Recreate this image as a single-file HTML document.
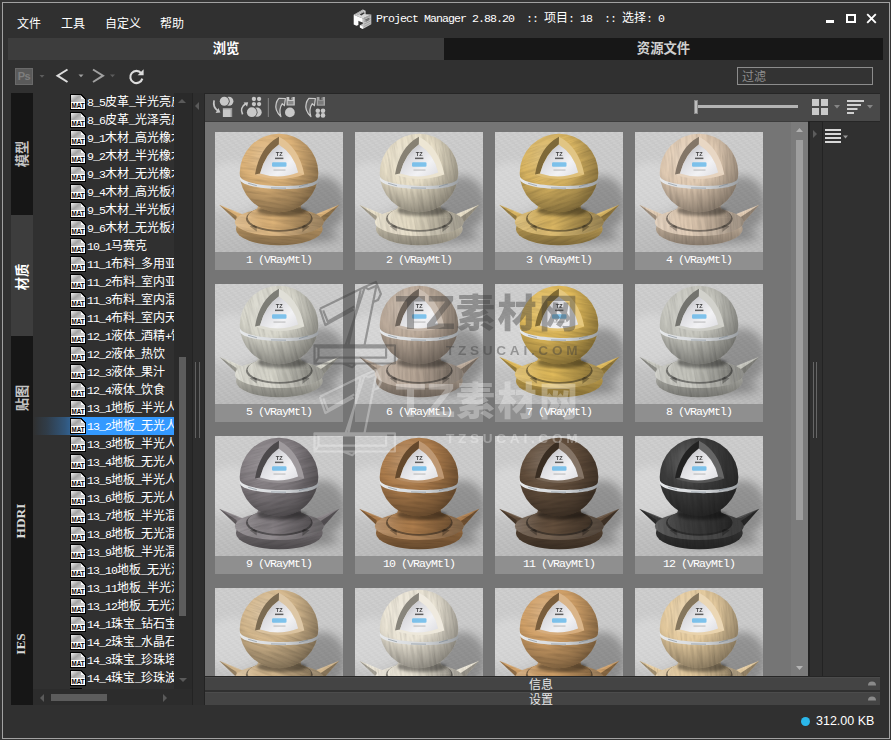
<!DOCTYPE html>
<html lang="zh"><head><meta charset="utf-8"><title>Project Manager</title>
<style>
html,body{margin:0;padding:0;background:#353535;}
body{width:891px;height:740px;overflow:hidden;font-family:"Liberation Sans","Noto Sans CJK SC",sans-serif;font-size:12px;color:#fff;}
#win{position:relative;width:891px;height:740px;background:#353535;overflow:hidden;}
#win div,#win span.ab,#win svg{position:absolute;}
.frame{left:2px;top:2px;width:886px;height:735px;border:1px solid #a2a2a2;background:#303030;}
.menu{top:16px;height:16px;line-height:16px;font-size:12px;color:#fff;white-space:nowrap;}
.title{left:376px;top:11px;height:16px;line-height:16px;white-space:nowrap;color:#fff;font-family:"Liberation Mono","Noto Sans CJK SC",monospace;font-size:12px;}
.a{font-family:"Liberation Mono",monospace;font-size:11.6px;letter-spacing:-.96px;}
.tab{top:38px;height:22px;line-height:21px;text-align:center;font-weight:bold;font-size:13.33px;}
.vt{left:11px;width:22px;background:#161616;}
.vt span{position:absolute;left:calc(50% - 1px);top:50%;white-space:nowrap;font-weight:bold;font-size:13.33px;transform:translate(-50%,-50%) rotate(-90deg);color:#c4c4c4;}
.row{left:0px;width:141px;height:18px;overflow:hidden;white-space:nowrap;}
.row .t{position:absolute;left:54px;top:1px;height:18px;line-height:18px;font-family:"Liberation Mono","Noto Sans CJK SC",monospace;font-size:12px;color:#fff;white-space:nowrap;}
.tile{width:128px;height:138px;background:#8f8f8f;overflow:hidden;}
.tile .lb{left:0;top:120px;width:128px;height:18px;line-height:16px;text-align:center;color:#fff;font-family:"Liberation Mono",monospace;font-size:12px;white-space:nowrap;background:#8f8f8f;}

</style></head>
<body>
<div id="win">
<div class="frame"></div>
<div class="menu" style="left:17px">文件</div>
<div class="menu" style="left:61px">工具</div>
<div class="menu" style="left:105px">自定义</div>
<div class="menu" style="left:160px">帮助</div>
<svg style="left:352.5px;top:8.5px" width="19" height="21" viewBox="0 0 19 21">
<path d="M.7 5.8 L9.8 .4 L12.6 1.7 V5.2 L18.3 5.6 L9.8 9.6Z" fill="#d6d6d6"/>
<path d="M6.6 5.4 L10.4 3.2 L12 4 L8.4 6.4Z" fill="#3a3a3a"/>
<path d="M9.8 9.6 L18.3 5.6 V15.2 L9.8 20 L6.9 18.6 V16.3 L9.8 14.8Z" fill="#c2c2c2"/>
<path d="M10.6 11.2 L16.4 8.4 V11 L12.6 13 V10.9Z" fill="#6a6a6a"/>
<path d="M.7 5.8 L9.8 9.6 V13.6 L6.9 12.4 L5.4 11.8 V16 L3.5 16.8 L.7 15.4Z" fill="#fdfdfd"/>
<path d="M6.9 16.3 L9.8 17.6 V20 L6.9 18.6Z" fill="#fff"/>
<path d="M2 5.6 L10.4 .9 M3.6 6.3 L11.6 1.8 M11 9.8 L17.8 6.6 M11 12.6 L17.8 9.2 M11 15.2 L17.8 11.8 M11 17.6 L17.8 14" stroke="#8a8a8a" stroke-width=".6" fill="none"/>
</svg>
<div class="title"><span class="a">Project&nbsp;Manager&nbsp;2.88.20&nbsp;&nbsp;::&nbsp;</span>项目<span class="a">:&nbsp;18&nbsp;&nbsp;::&nbsp;</span>选择<span class="a">:&nbsp;0</span></div>
<div style="left:826px;top:20px;width:8px;height:3px;background:#fff"></div>
<div style="left:846px;top:14px;width:6px;height:5px;border:2px solid #fff"></div>
<svg style="left:866px;top:13px" width="11" height="11" viewBox="0 0 11 11"><path d="M1.2 1.2 L9.8 9.8 M9.8 1.2 L1.2 9.8" stroke="#fff" stroke-width="1.9" fill="none"/></svg>
<div class="tab" style="left:8px;width:436px;background:#3d3d3d;color:#fff">浏览</div>
<div class="tab" style="left:444px;width:439px;background:#171717;color:#cfcfcf">资源文件</div>
<div style="left:15px;top:68px;width:16px;height:15px;border:1px solid #6a6a6a;background:#5a5a5a;color:#7e7e7e;font-size:11px;line-height:15px;text-align:center;font-weight:bold;letter-spacing:-.5px">Ps</div>
<svg style="left:36px;top:64px" width="120" height="24" viewBox="36 64 120 24">
<path d="M39.5 75 h5 l-2.5 2.8z" fill="#5c5c5c"/>
<path d="M67.5 69.5 L57.5 75.7 L67.5 82" stroke="#dcdcdc" stroke-width="2" fill="none"/>
<path d="M78.5 74.5 h5 l-2.5 2.8z" fill="#a0a0a0"/>
<path d="M93 69.5 L103 75.7 L93 82" stroke="#a0a0a0" stroke-width="2" fill="none"/>
<path d="M110 74.5 h5 l-2.5 2.8z" fill="#5c5c5c"/>
<path d="M141.2 73.2 A6.1 6.1 0 1 0 142.3 78.6" stroke="#dcdcdc" stroke-width="2.1" fill="none"/>
<path d="M143.6 69.3 V75.3 H137.6 Z" fill="#dcdcdc"/>
</svg>
<div style="left:737px;top:67px;width:134px;height:16px;border:1px solid #8c8c8c;background:#333;color:#8e8e8e;line-height:19px;font-size:12px;text-indent:4px;overflow:hidden">过滤</div>
<div class="vt" style="top:93px;height:122px;"><span style="top:calc(50% + 0px);">模型</span></div>
<div class="vt" style="top:215px;height:121px;background:#3d3d3d;"><span style="top:calc(50% + 1px);color:#fff;">材质</span></div>
<div class="vt" style="top:336px;height:121px;"><span style="top:calc(50% + 1.5px);">贴图</span></div>
<div class="vt" style="top:457px;height:122px;"><span style="top:calc(50% + 2.5px);font-family:'Liberation Serif',serif;color:#d8d8d8;">HDRI</span></div>
<div class="vt" style="top:579px;height:126px;"><span style="top:calc(50% + 2px);font-family:'Liberation Serif',serif;color:#d8d8d8;">IES</span></div>
<div style="left:801px;top:717px;width:8.5px;height:8.5px;border-radius:5px;background:#2bb7ea"></div>
<div style="left:816px;top:713px;height:16px;line-height:16px;font-size:12.5px;color:#fff;white-space:nowrap">312.00 KB</div>
<div style="left:205px;top:677px;width:675px;height:12px;background:#444;border-top:1px solid #4c4c4c"></div>
<div style="left:529px;top:678px;height:14px;line-height:14px;font-size:12px;color:#e6e6e6;white-space:nowrap">信息</div>
<svg style="left:868px;top:681px" width="8" height="5" viewBox="0 0 8 5"><path d="M0 4.5 A4 4 0 0 1 8 4.5Z" fill="#8a8a8a"/></svg>
<div style="left:205px;top:692px;width:675px;height:12px;background:#444;border-top:1px solid #4c4c4c"></div>
<div style="left:529px;top:693px;height:14px;line-height:14px;font-size:12px;color:#e6e6e6;white-space:nowrap">设置</div>
<svg style="left:868px;top:696px" width="8" height="5" viewBox="0 0 8 5"><path d="M0 4.5 A4 4 0 0 1 8 4.5Z" fill="#8a8a8a"/></svg>
<svg width="0" height="0" style="left:0;top:0"><defs><linearGradient id="ig" x1="0" y1="0" x2="1" y2=".6"><stop offset="0" stop-color="#f2f2f2"/><stop offset=".5" stop-color="#a4a4a4"/><stop offset="1" stop-color="#d2d2d2"/></linearGradient></defs></svg>
<div style="left:33px;top:93px;width:159px;height:596px;overflow:hidden;background:#303030">
<div class="row" style="left:0;top:0px;"><svg style="left:37px;top:1px" width="16" height="16" viewBox="0 0 16 16" shape-rendering="crispEdges"><path d="M0 0H11L16 5V16H0Z" fill="#000"/><path d="M1 1H10.6L15 5.4V8H1Z" fill="url(#ig)"/><path d="M11 1.6 V5 H14.4Z" fill="#f4f4f4" shape-rendering="auto"/><rect x="1" y="8" width="14" height="7" fill="#fff"/><text x="1.6" y="14" font-family="'Liberation Sans',sans-serif" font-weight="bold" font-size="7.2" textLength="13" lengthAdjust="spacingAndGlyphs" fill="#000" shape-rendering="auto">MAT</text></svg><span class="t"><span class="a">8_5</span>皮革<span class="a">_</span>半光亮皮</span></div>
<div class="row" style="left:0;top:18px;"><svg style="left:37px;top:1px" width="16" height="16" viewBox="0 0 16 16" shape-rendering="crispEdges"><path d="M0 0H11L16 5V16H0Z" fill="#000"/><path d="M1 1H10.6L15 5.4V8H1Z" fill="url(#ig)"/><path d="M11 1.6 V5 H14.4Z" fill="#f4f4f4" shape-rendering="auto"/><rect x="1" y="8" width="14" height="7" fill="#fff"/><text x="1.6" y="14" font-family="'Liberation Sans',sans-serif" font-weight="bold" font-size="7.2" textLength="13" lengthAdjust="spacingAndGlyphs" fill="#000" shape-rendering="auto">MAT</text></svg><span class="t"><span class="a">8_6</span>皮革<span class="a">_</span>光泽亮皮</span></div>
<div class="row" style="left:0;top:36px;"><svg style="left:37px;top:1px" width="16" height="16" viewBox="0 0 16 16" shape-rendering="crispEdges"><path d="M0 0H11L16 5V16H0Z" fill="#000"/><path d="M1 1H10.6L15 5.4V8H1Z" fill="url(#ig)"/><path d="M11 1.6 V5 H14.4Z" fill="#f4f4f4" shape-rendering="auto"/><rect x="1" y="8" width="14" height="7" fill="#fff"/><text x="1.6" y="14" font-family="'Liberation Sans',sans-serif" font-weight="bold" font-size="7.2" textLength="13" lengthAdjust="spacingAndGlyphs" fill="#000" shape-rendering="auto">MAT</text></svg><span class="t"><span class="a">9_1</span>木材<span class="a">_</span>高光橡木</span></div>
<div class="row" style="left:0;top:54px;"><svg style="left:37px;top:1px" width="16" height="16" viewBox="0 0 16 16" shape-rendering="crispEdges"><path d="M0 0H11L16 5V16H0Z" fill="#000"/><path d="M1 1H10.6L15 5.4V8H1Z" fill="url(#ig)"/><path d="M11 1.6 V5 H14.4Z" fill="#f4f4f4" shape-rendering="auto"/><rect x="1" y="8" width="14" height="7" fill="#fff"/><text x="1.6" y="14" font-family="'Liberation Sans',sans-serif" font-weight="bold" font-size="7.2" textLength="13" lengthAdjust="spacingAndGlyphs" fill="#000" shape-rendering="auto">MAT</text></svg><span class="t"><span class="a">9_2</span>木材<span class="a">_</span>半光橡木</span></div>
<div class="row" style="left:0;top:72px;"><svg style="left:37px;top:1px" width="16" height="16" viewBox="0 0 16 16" shape-rendering="crispEdges"><path d="M0 0H11L16 5V16H0Z" fill="#000"/><path d="M1 1H10.6L15 5.4V8H1Z" fill="url(#ig)"/><path d="M11 1.6 V5 H14.4Z" fill="#f4f4f4" shape-rendering="auto"/><rect x="1" y="8" width="14" height="7" fill="#fff"/><text x="1.6" y="14" font-family="'Liberation Sans',sans-serif" font-weight="bold" font-size="7.2" textLength="13" lengthAdjust="spacingAndGlyphs" fill="#000" shape-rendering="auto">MAT</text></svg><span class="t"><span class="a">9_3</span>木材<span class="a">_</span>无光橡木</span></div>
<div class="row" style="left:0;top:90px;"><svg style="left:37px;top:1px" width="16" height="16" viewBox="0 0 16 16" shape-rendering="crispEdges"><path d="M0 0H11L16 5V16H0Z" fill="#000"/><path d="M1 1H10.6L15 5.4V8H1Z" fill="url(#ig)"/><path d="M11 1.6 V5 H14.4Z" fill="#f4f4f4" shape-rendering="auto"/><rect x="1" y="8" width="14" height="7" fill="#fff"/><text x="1.6" y="14" font-family="'Liberation Sans',sans-serif" font-weight="bold" font-size="7.2" textLength="13" lengthAdjust="spacingAndGlyphs" fill="#000" shape-rendering="auto">MAT</text></svg><span class="t"><span class="a">9_4</span>木材<span class="a">_</span>高光板材</span></div>
<div class="row" style="left:0;top:108px;"><svg style="left:37px;top:1px" width="16" height="16" viewBox="0 0 16 16" shape-rendering="crispEdges"><path d="M0 0H11L16 5V16H0Z" fill="#000"/><path d="M1 1H10.6L15 5.4V8H1Z" fill="url(#ig)"/><path d="M11 1.6 V5 H14.4Z" fill="#f4f4f4" shape-rendering="auto"/><rect x="1" y="8" width="14" height="7" fill="#fff"/><text x="1.6" y="14" font-family="'Liberation Sans',sans-serif" font-weight="bold" font-size="7.2" textLength="13" lengthAdjust="spacingAndGlyphs" fill="#000" shape-rendering="auto">MAT</text></svg><span class="t"><span class="a">9_5</span>木材<span class="a">_</span>半光板材</span></div>
<div class="row" style="left:0;top:126px;"><svg style="left:37px;top:1px" width="16" height="16" viewBox="0 0 16 16" shape-rendering="crispEdges"><path d="M0 0H11L16 5V16H0Z" fill="#000"/><path d="M1 1H10.6L15 5.4V8H1Z" fill="url(#ig)"/><path d="M11 1.6 V5 H14.4Z" fill="#f4f4f4" shape-rendering="auto"/><rect x="1" y="8" width="14" height="7" fill="#fff"/><text x="1.6" y="14" font-family="'Liberation Sans',sans-serif" font-weight="bold" font-size="7.2" textLength="13" lengthAdjust="spacingAndGlyphs" fill="#000" shape-rendering="auto">MAT</text></svg><span class="t"><span class="a">9_6</span>木材<span class="a">_</span>无光板材</span></div>
<div class="row" style="left:0;top:144px;"><svg style="left:37px;top:1px" width="16" height="16" viewBox="0 0 16 16" shape-rendering="crispEdges"><path d="M0 0H11L16 5V16H0Z" fill="#000"/><path d="M1 1H10.6L15 5.4V8H1Z" fill="url(#ig)"/><path d="M11 1.6 V5 H14.4Z" fill="#f4f4f4" shape-rendering="auto"/><rect x="1" y="8" width="14" height="7" fill="#fff"/><text x="1.6" y="14" font-family="'Liberation Sans',sans-serif" font-weight="bold" font-size="7.2" textLength="13" lengthAdjust="spacingAndGlyphs" fill="#000" shape-rendering="auto">MAT</text></svg><span class="t"><span class="a">10_1</span>马赛克</span></div>
<div class="row" style="left:0;top:162px;"><svg style="left:37px;top:1px" width="16" height="16" viewBox="0 0 16 16" shape-rendering="crispEdges"><path d="M0 0H11L16 5V16H0Z" fill="#000"/><path d="M1 1H10.6L15 5.4V8H1Z" fill="url(#ig)"/><path d="M11 1.6 V5 H14.4Z" fill="#f4f4f4" shape-rendering="auto"/><rect x="1" y="8" width="14" height="7" fill="#fff"/><text x="1.6" y="14" font-family="'Liberation Sans',sans-serif" font-weight="bold" font-size="7.2" textLength="13" lengthAdjust="spacingAndGlyphs" fill="#000" shape-rendering="auto">MAT</text></svg><span class="t"><span class="a">11_1</span>布料<span class="a">_</span>多用亚麻</span></div>
<div class="row" style="left:0;top:180px;"><svg style="left:37px;top:1px" width="16" height="16" viewBox="0 0 16 16" shape-rendering="crispEdges"><path d="M0 0H11L16 5V16H0Z" fill="#000"/><path d="M1 1H10.6L15 5.4V8H1Z" fill="url(#ig)"/><path d="M11 1.6 V5 H14.4Z" fill="#f4f4f4" shape-rendering="auto"/><rect x="1" y="8" width="14" height="7" fill="#fff"/><text x="1.6" y="14" font-family="'Liberation Sans',sans-serif" font-weight="bold" font-size="7.2" textLength="13" lengthAdjust="spacingAndGlyphs" fill="#000" shape-rendering="auto">MAT</text></svg><span class="t"><span class="a">11_2</span>布料<span class="a">_</span>室内亚麻</span></div>
<div class="row" style="left:0;top:198px;"><svg style="left:37px;top:1px" width="16" height="16" viewBox="0 0 16 16" shape-rendering="crispEdges"><path d="M0 0H11L16 5V16H0Z" fill="#000"/><path d="M1 1H10.6L15 5.4V8H1Z" fill="url(#ig)"/><path d="M11 1.6 V5 H14.4Z" fill="#f4f4f4" shape-rendering="auto"/><rect x="1" y="8" width="14" height="7" fill="#fff"/><text x="1.6" y="14" font-family="'Liberation Sans',sans-serif" font-weight="bold" font-size="7.2" textLength="13" lengthAdjust="spacingAndGlyphs" fill="#000" shape-rendering="auto">MAT</text></svg><span class="t"><span class="a">11_3</span>布料<span class="a">_</span>室内混纺</span></div>
<div class="row" style="left:0;top:216px;"><svg style="left:37px;top:1px" width="16" height="16" viewBox="0 0 16 16" shape-rendering="crispEdges"><path d="M0 0H11L16 5V16H0Z" fill="#000"/><path d="M1 1H10.6L15 5.4V8H1Z" fill="url(#ig)"/><path d="M11 1.6 V5 H14.4Z" fill="#f4f4f4" shape-rendering="auto"/><rect x="1" y="8" width="14" height="7" fill="#fff"/><text x="1.6" y="14" font-family="'Liberation Sans',sans-serif" font-weight="bold" font-size="7.2" textLength="13" lengthAdjust="spacingAndGlyphs" fill="#000" shape-rendering="auto">MAT</text></svg><span class="t"><span class="a">11_4</span>布料<span class="a">_</span>室内天鹅</span></div>
<div class="row" style="left:0;top:234px;"><svg style="left:37px;top:1px" width="16" height="16" viewBox="0 0 16 16" shape-rendering="crispEdges"><path d="M0 0H11L16 5V16H0Z" fill="#000"/><path d="M1 1H10.6L15 5.4V8H1Z" fill="url(#ig)"/><path d="M11 1.6 V5 H14.4Z" fill="#f4f4f4" shape-rendering="auto"/><rect x="1" y="8" width="14" height="7" fill="#fff"/><text x="1.6" y="14" font-family="'Liberation Sans',sans-serif" font-weight="bold" font-size="7.2" textLength="13" lengthAdjust="spacingAndGlyphs" fill="#000" shape-rendering="auto">MAT</text></svg><span class="t"><span class="a">12_1</span>液体<span class="a">_</span>酒精<span class="a">+</span>饮</span></div>
<div class="row" style="left:0;top:252px;"><svg style="left:37px;top:1px" width="16" height="16" viewBox="0 0 16 16" shape-rendering="crispEdges"><path d="M0 0H11L16 5V16H0Z" fill="#000"/><path d="M1 1H10.6L15 5.4V8H1Z" fill="url(#ig)"/><path d="M11 1.6 V5 H14.4Z" fill="#f4f4f4" shape-rendering="auto"/><rect x="1" y="8" width="14" height="7" fill="#fff"/><text x="1.6" y="14" font-family="'Liberation Sans',sans-serif" font-weight="bold" font-size="7.2" textLength="13" lengthAdjust="spacingAndGlyphs" fill="#000" shape-rendering="auto">MAT</text></svg><span class="t"><span class="a">12_2</span>液体<span class="a">_</span>热饮</span></div>
<div class="row" style="left:0;top:270px;"><svg style="left:37px;top:1px" width="16" height="16" viewBox="0 0 16 16" shape-rendering="crispEdges"><path d="M0 0H11L16 5V16H0Z" fill="#000"/><path d="M1 1H10.6L15 5.4V8H1Z" fill="url(#ig)"/><path d="M11 1.6 V5 H14.4Z" fill="#f4f4f4" shape-rendering="auto"/><rect x="1" y="8" width="14" height="7" fill="#fff"/><text x="1.6" y="14" font-family="'Liberation Sans',sans-serif" font-weight="bold" font-size="7.2" textLength="13" lengthAdjust="spacingAndGlyphs" fill="#000" shape-rendering="auto">MAT</text></svg><span class="t"><span class="a">12_3</span>液体<span class="a">_</span>果汁</span></div>
<div class="row" style="left:0;top:288px;"><svg style="left:37px;top:1px" width="16" height="16" viewBox="0 0 16 16" shape-rendering="crispEdges"><path d="M0 0H11L16 5V16H0Z" fill="#000"/><path d="M1 1H10.6L15 5.4V8H1Z" fill="url(#ig)"/><path d="M11 1.6 V5 H14.4Z" fill="#f4f4f4" shape-rendering="auto"/><rect x="1" y="8" width="14" height="7" fill="#fff"/><text x="1.6" y="14" font-family="'Liberation Sans',sans-serif" font-weight="bold" font-size="7.2" textLength="13" lengthAdjust="spacingAndGlyphs" fill="#000" shape-rendering="auto">MAT</text></svg><span class="t"><span class="a">12_4</span>液体<span class="a">_</span>饮食</span></div>
<div class="row" style="left:0;top:306px;"><svg style="left:37px;top:1px" width="16" height="16" viewBox="0 0 16 16" shape-rendering="crispEdges"><path d="M0 0H11L16 5V16H0Z" fill="#000"/><path d="M1 1H10.6L15 5.4V8H1Z" fill="url(#ig)"/><path d="M11 1.6 V5 H14.4Z" fill="#f4f4f4" shape-rendering="auto"/><rect x="1" y="8" width="14" height="7" fill="#fff"/><text x="1.6" y="14" font-family="'Liberation Sans',sans-serif" font-weight="bold" font-size="7.2" textLength="13" lengthAdjust="spacingAndGlyphs" fill="#000" shape-rendering="auto">MAT</text></svg><span class="t"><span class="a">13_1</span>地板<span class="a">_</span>半光人</span></div>
<div class="row" style="left:0;top:324px;background:linear-gradient(90deg,rgba(51,153,255,0) 0px,rgba(51,153,255,.12) 14px,rgba(51,153,255,.36) 32px,rgba(51,153,255,.5) 39px,#3399ff 50px);"><svg style="left:37px;top:1px" width="16" height="16" viewBox="0 0 16 16" shape-rendering="crispEdges"><path d="M0 0H11L16 5V16H0Z" fill="#000"/><path d="M1 1H10.6L15 5.4V8H1Z" fill="url(#ig)"/><path d="M11 1.6 V5 H14.4Z" fill="#f4f4f4" shape-rendering="auto"/><rect x="1" y="8" width="14" height="7" fill="#fff"/><text x="1.6" y="14" font-family="'Liberation Sans',sans-serif" font-weight="bold" font-size="7.2" textLength="13" lengthAdjust="spacingAndGlyphs" fill="#000" shape-rendering="auto">MAT</text></svg><span class="t"><span class="a">13_2</span>地板<span class="a">_</span>无光人</span></div>
<div class="row" style="left:0;top:342px;"><svg style="left:37px;top:1px" width="16" height="16" viewBox="0 0 16 16" shape-rendering="crispEdges"><path d="M0 0H11L16 5V16H0Z" fill="#000"/><path d="M1 1H10.6L15 5.4V8H1Z" fill="url(#ig)"/><path d="M11 1.6 V5 H14.4Z" fill="#f4f4f4" shape-rendering="auto"/><rect x="1" y="8" width="14" height="7" fill="#fff"/><text x="1.6" y="14" font-family="'Liberation Sans',sans-serif" font-weight="bold" font-size="7.2" textLength="13" lengthAdjust="spacingAndGlyphs" fill="#000" shape-rendering="auto">MAT</text></svg><span class="t"><span class="a">13_3</span>地板<span class="a">_</span>半光人</span></div>
<div class="row" style="left:0;top:360px;"><svg style="left:37px;top:1px" width="16" height="16" viewBox="0 0 16 16" shape-rendering="crispEdges"><path d="M0 0H11L16 5V16H0Z" fill="#000"/><path d="M1 1H10.6L15 5.4V8H1Z" fill="url(#ig)"/><path d="M11 1.6 V5 H14.4Z" fill="#f4f4f4" shape-rendering="auto"/><rect x="1" y="8" width="14" height="7" fill="#fff"/><text x="1.6" y="14" font-family="'Liberation Sans',sans-serif" font-weight="bold" font-size="7.2" textLength="13" lengthAdjust="spacingAndGlyphs" fill="#000" shape-rendering="auto">MAT</text></svg><span class="t"><span class="a">13_4</span>地板<span class="a">_</span>无光人</span></div>
<div class="row" style="left:0;top:378px;"><svg style="left:37px;top:1px" width="16" height="16" viewBox="0 0 16 16" shape-rendering="crispEdges"><path d="M0 0H11L16 5V16H0Z" fill="#000"/><path d="M1 1H10.6L15 5.4V8H1Z" fill="url(#ig)"/><path d="M11 1.6 V5 H14.4Z" fill="#f4f4f4" shape-rendering="auto"/><rect x="1" y="8" width="14" height="7" fill="#fff"/><text x="1.6" y="14" font-family="'Liberation Sans',sans-serif" font-weight="bold" font-size="7.2" textLength="13" lengthAdjust="spacingAndGlyphs" fill="#000" shape-rendering="auto">MAT</text></svg><span class="t"><span class="a">13_5</span>地板<span class="a">_</span>半光人</span></div>
<div class="row" style="left:0;top:396px;"><svg style="left:37px;top:1px" width="16" height="16" viewBox="0 0 16 16" shape-rendering="crispEdges"><path d="M0 0H11L16 5V16H0Z" fill="#000"/><path d="M1 1H10.6L15 5.4V8H1Z" fill="url(#ig)"/><path d="M11 1.6 V5 H14.4Z" fill="#f4f4f4" shape-rendering="auto"/><rect x="1" y="8" width="14" height="7" fill="#fff"/><text x="1.6" y="14" font-family="'Liberation Sans',sans-serif" font-weight="bold" font-size="7.2" textLength="13" lengthAdjust="spacingAndGlyphs" fill="#000" shape-rendering="auto">MAT</text></svg><span class="t"><span class="a">13_6</span>地板<span class="a">_</span>无光人</span></div>
<div class="row" style="left:0;top:414px;"><svg style="left:37px;top:1px" width="16" height="16" viewBox="0 0 16 16" shape-rendering="crispEdges"><path d="M0 0H11L16 5V16H0Z" fill="#000"/><path d="M1 1H10.6L15 5.4V8H1Z" fill="url(#ig)"/><path d="M11 1.6 V5 H14.4Z" fill="#f4f4f4" shape-rendering="auto"/><rect x="1" y="8" width="14" height="7" fill="#fff"/><text x="1.6" y="14" font-family="'Liberation Sans',sans-serif" font-weight="bold" font-size="7.2" textLength="13" lengthAdjust="spacingAndGlyphs" fill="#000" shape-rendering="auto">MAT</text></svg><span class="t"><span class="a">13_7</span>地板<span class="a">_</span>半光混</span></div>
<div class="row" style="left:0;top:432px;"><svg style="left:37px;top:1px" width="16" height="16" viewBox="0 0 16 16" shape-rendering="crispEdges"><path d="M0 0H11L16 5V16H0Z" fill="#000"/><path d="M1 1H10.6L15 5.4V8H1Z" fill="url(#ig)"/><path d="M11 1.6 V5 H14.4Z" fill="#f4f4f4" shape-rendering="auto"/><rect x="1" y="8" width="14" height="7" fill="#fff"/><text x="1.6" y="14" font-family="'Liberation Sans',sans-serif" font-weight="bold" font-size="7.2" textLength="13" lengthAdjust="spacingAndGlyphs" fill="#000" shape-rendering="auto">MAT</text></svg><span class="t"><span class="a">13_8</span>地板<span class="a">_</span>无光混</span></div>
<div class="row" style="left:0;top:450px;"><svg style="left:37px;top:1px" width="16" height="16" viewBox="0 0 16 16" shape-rendering="crispEdges"><path d="M0 0H11L16 5V16H0Z" fill="#000"/><path d="M1 1H10.6L15 5.4V8H1Z" fill="url(#ig)"/><path d="M11 1.6 V5 H14.4Z" fill="#f4f4f4" shape-rendering="auto"/><rect x="1" y="8" width="14" height="7" fill="#fff"/><text x="1.6" y="14" font-family="'Liberation Sans',sans-serif" font-weight="bold" font-size="7.2" textLength="13" lengthAdjust="spacingAndGlyphs" fill="#000" shape-rendering="auto">MAT</text></svg><span class="t"><span class="a">13_9</span>地板<span class="a">_</span>半光混</span></div>
<div class="row" style="left:0;top:468px;"><svg style="left:37px;top:1px" width="16" height="16" viewBox="0 0 16 16" shape-rendering="crispEdges"><path d="M0 0H11L16 5V16H0Z" fill="#000"/><path d="M1 1H10.6L15 5.4V8H1Z" fill="url(#ig)"/><path d="M11 1.6 V5 H14.4Z" fill="#f4f4f4" shape-rendering="auto"/><rect x="1" y="8" width="14" height="7" fill="#fff"/><text x="1.6" y="14" font-family="'Liberation Sans',sans-serif" font-weight="bold" font-size="7.2" textLength="13" lengthAdjust="spacingAndGlyphs" fill="#000" shape-rendering="auto">MAT</text></svg><span class="t"><span class="a">13_10</span>地板<span class="a">_</span>无光混</span></div>
<div class="row" style="left:0;top:486px;"><svg style="left:37px;top:1px" width="16" height="16" viewBox="0 0 16 16" shape-rendering="crispEdges"><path d="M0 0H11L16 5V16H0Z" fill="#000"/><path d="M1 1H10.6L15 5.4V8H1Z" fill="url(#ig)"/><path d="M11 1.6 V5 H14.4Z" fill="#f4f4f4" shape-rendering="auto"/><rect x="1" y="8" width="14" height="7" fill="#fff"/><text x="1.6" y="14" font-family="'Liberation Sans',sans-serif" font-weight="bold" font-size="7.2" textLength="13" lengthAdjust="spacingAndGlyphs" fill="#000" shape-rendering="auto">MAT</text></svg><span class="t"><span class="a">13_11</span>地板<span class="a">_</span>半光混</span></div>
<div class="row" style="left:0;top:504px;"><svg style="left:37px;top:1px" width="16" height="16" viewBox="0 0 16 16" shape-rendering="crispEdges"><path d="M0 0H11L16 5V16H0Z" fill="#000"/><path d="M1 1H10.6L15 5.4V8H1Z" fill="url(#ig)"/><path d="M11 1.6 V5 H14.4Z" fill="#f4f4f4" shape-rendering="auto"/><rect x="1" y="8" width="14" height="7" fill="#fff"/><text x="1.6" y="14" font-family="'Liberation Sans',sans-serif" font-weight="bold" font-size="7.2" textLength="13" lengthAdjust="spacingAndGlyphs" fill="#000" shape-rendering="auto">MAT</text></svg><span class="t"><span class="a">13_12</span>地板<span class="a">_</span>无光混</span></div>
<div class="row" style="left:0;top:522px;"><svg style="left:37px;top:1px" width="16" height="16" viewBox="0 0 16 16" shape-rendering="crispEdges"><path d="M0 0H11L16 5V16H0Z" fill="#000"/><path d="M1 1H10.6L15 5.4V8H1Z" fill="url(#ig)"/><path d="M11 1.6 V5 H14.4Z" fill="#f4f4f4" shape-rendering="auto"/><rect x="1" y="8" width="14" height="7" fill="#fff"/><text x="1.6" y="14" font-family="'Liberation Sans',sans-serif" font-weight="bold" font-size="7.2" textLength="13" lengthAdjust="spacingAndGlyphs" fill="#000" shape-rendering="auto">MAT</text></svg><span class="t"><span class="a">14_1</span>珠宝<span class="a">_</span>钻石宝石</span></div>
<div class="row" style="left:0;top:540px;"><svg style="left:37px;top:1px" width="16" height="16" viewBox="0 0 16 16" shape-rendering="crispEdges"><path d="M0 0H11L16 5V16H0Z" fill="#000"/><path d="M1 1H10.6L15 5.4V8H1Z" fill="url(#ig)"/><path d="M11 1.6 V5 H14.4Z" fill="#f4f4f4" shape-rendering="auto"/><rect x="1" y="8" width="14" height="7" fill="#fff"/><text x="1.6" y="14" font-family="'Liberation Sans',sans-serif" font-weight="bold" font-size="7.2" textLength="13" lengthAdjust="spacingAndGlyphs" fill="#000" shape-rendering="auto">MAT</text></svg><span class="t"><span class="a">14_2</span>珠宝<span class="a">_</span>水晶石</span></div>
<div class="row" style="left:0;top:558px;"><svg style="left:37px;top:1px" width="16" height="16" viewBox="0 0 16 16" shape-rendering="crispEdges"><path d="M0 0H11L16 5V16H0Z" fill="#000"/><path d="M1 1H10.6L15 5.4V8H1Z" fill="url(#ig)"/><path d="M11 1.6 V5 H14.4Z" fill="#f4f4f4" shape-rendering="auto"/><rect x="1" y="8" width="14" height="7" fill="#fff"/><text x="1.6" y="14" font-family="'Liberation Sans',sans-serif" font-weight="bold" font-size="7.2" textLength="13" lengthAdjust="spacingAndGlyphs" fill="#000" shape-rendering="auto">MAT</text></svg><span class="t"><span class="a">14_3</span>珠宝<span class="a">_</span>珍珠塔</span></div>
<div class="row" style="left:0;top:576px;"><svg style="left:37px;top:1px" width="16" height="16" viewBox="0 0 16 16" shape-rendering="crispEdges"><path d="M0 0H11L16 5V16H0Z" fill="#000"/><path d="M1 1H10.6L15 5.4V8H1Z" fill="url(#ig)"/><path d="M11 1.6 V5 H14.4Z" fill="#f4f4f4" shape-rendering="auto"/><rect x="1" y="8" width="14" height="7" fill="#fff"/><text x="1.6" y="14" font-family="'Liberation Sans',sans-serif" font-weight="bold" font-size="7.2" textLength="13" lengthAdjust="spacingAndGlyphs" fill="#000" shape-rendering="auto">MAT</text></svg><span class="t"><span class="a">14_4</span>珠宝<span class="a">_</span>珍珠波</span></div>
<div class="row" style="left:0;top:594px;"><svg style="left:37px;top:1px" width="16" height="16" viewBox="0 0 16 16" shape-rendering="crispEdges"><path d="M0 0H11L16 5V16H0Z" fill="#000"/><path d="M1 1H10.6L15 5.4V8H1Z" fill="url(#ig)"/><path d="M11 1.6 V5 H14.4Z" fill="#f4f4f4" shape-rendering="auto"/><rect x="1" y="8" width="14" height="7" fill="#fff"/><text x="1.6" y="14" font-family="'Liberation Sans',sans-serif" font-weight="bold" font-size="7.2" textLength="13" lengthAdjust="spacingAndGlyphs" fill="#000" shape-rendering="auto">MAT</text></svg><span class="t"></span></div>
</div>
<div style="left:174px;top:93px;width:18px;height:596px;background:#2a2a2a"></div>
<svg style="left:178px;top:99px" width="8" height="4" viewBox="0 0 8 4"><path d="M0 4 L4 0 L8 4Z" fill="#5a5a5a"/></svg>
<svg style="left:179px;top:678px" width="8" height="4" viewBox="0 0 8 4"><path d="M0 0 L4 4 L8 0Z" fill="#5a5a5a"/></svg>
<div style="left:179px;top:357px;width:7px;height:259px;background:#5c5c5c"></div>
<div style="left:33px;top:689px;width:159px;height:16px;background:#2c2c2c"></div>
<svg style="left:40px;top:694px" width="4" height="8" viewBox="0 0 4 8"><path d="M4 0 L0 4 L4 8Z" fill="#5a5a5a"/></svg>
<svg style="left:163px;top:694px" width="4" height="8" viewBox="0 0 4 8"><path d="M0 0 L4 4 L0 8Z" fill="#5a5a5a"/></svg>
<div style="left:51px;top:694px;width:56px;height:7px;background:#5c5c5c"></div>
<div style="left:192px;top:93px;width:13px;height:612px;background:#232323"></div>
<div style="left:193px;top:93px;width:11px;height:612px;background:#2e2e2e"></div>
<svg style="left:195px;top:102px" width="4" height="8" viewBox="0 0 4 8"><path d="M4 0 L0 4 L4 8Z" fill="#5a5a5a"/></svg>
<div style="left:195px;top:362px;width:1px;height:76px;background:#606060"></div><div style="left:199px;top:362px;width:1px;height:76px;background:#606060"></div>
<div style="left:204px;top:93px;width:676px;height:584px;background:#262626"></div><div style="left:823px;top:122px;width:57px;height:554px;background:#303030"></div><div style="left:205px;top:94px;width:675px;height:27px;background:#494949"></div>
<div style="left:205px;top:121px;width:603px;height:555px;background:#757575;border-top:1px solid #3c3c3c;box-sizing:border-box"></div>
<div style="left:791px;top:122px;width:17px;height:554px;background:#7b7b7b"></div>
<div style="left:796px;top:140px;width:7px;height:380px;background:#9e9e9e"></div>
<svg style="left:796px;top:128px" width="7" height="4" viewBox="0 0 7 4"><path d="M0 4 L3.5 0 L7 4Z" fill="#b0b0b0"/></svg>
<svg style="left:796px;top:666px" width="7" height="4" viewBox="0 0 7 4"><path d="M0 0 L3.5 4 L7 0Z" fill="#b4b4b4"/></svg>
<div style="left:808px;top:121px;width:15px;height:555px;background:#232323"></div><div style="left:810px;top:122px;width:12px;height:554px;background:#2f2f2f"></div>
<svg style="left:813px;top:130px" width="4" height="8" viewBox="0 0 4 8"><path d="M0 0 L4 4 L0 8Z" fill="#5c5c5c"/></svg>
<div style="left:813px;top:362px;width:1px;height:76px;background:#666"></div><div style="left:816px;top:362px;width:1px;height:76px;background:#666"></div>
<svg style="left:825px;top:128px" width="24" height="16" viewBox="0 0 24 16"><path d="M0 2h16M0 6h16M0 10h16M0 14h16" stroke="#d8d8d8" stroke-width="2"/><path d="M18 7.5h5l-2.5 3z" fill="#9a9a9a"/></svg>
<div style="left:698px;top:105px;width:100px;height:3px;background:#b4b4b4"></div>
<div style="left:694px;top:100px;width:4px;height:14px;background:#bdbdbd;border:1px solid #8a8a8a;box-sizing:border-box"></div>
<svg style="left:812px;top:99px" width="17" height="17" viewBox="0 0 17 17"><path d="M0 0h7v7h-7zM9 0h7v7h-7zM0 9h7v7h-7zM9 9h7v7h-7z" fill="#c9c9c9"/></svg>
<svg style="left:834px;top:105px" width="6" height="4" viewBox="0 0 6 4"><path d="M0 0h6l-3 3.5z" fill="#858585"/></svg>
<svg style="left:847px;top:100px" width="17" height="15" viewBox="0 0 17 15"><path d="M0 1h17M0 5h14M0 9h10.5M0 13h7" stroke="#d0d0d0" stroke-width="2"/></svg>
<svg style="left:867px;top:105px" width="6" height="4" viewBox="0 0 6 4"><path d="M0 0h6l-3 3.5z" fill="#858585"/></svg>
<svg width="0" height="0" style="left:0;top:0"><defs>
<linearGradient id="bgG" x1="0" y1="0" x2="0.25" y2="1"><stop offset="0" stop-color="#d0d0d0"/><stop offset=".5" stop-color="#cccccc"/><stop offset="1" stop-color="#bcbcbc"/></linearGradient>
<pattern id="chk" width="7" height="4" patternUnits="userSpaceOnUse" patternTransform="skewX(-35)"><rect width="3.5" height="2" fill="#000" opacity=".035"/><rect x="3.5" y="2" width="3.5" height="2" fill="#000" opacity=".035"/></pattern>
<filter id="bl3" x="-30%" y="-30%" width="160%" height="160%"><feGaussianBlur stdDeviation="4"/></filter>
<filter id="bl1" x="-30%" y="-30%" width="160%" height="160%"><feGaussianBlur stdDeviation="1.6"/></filter>
<radialGradient id="sphS" cx=".36" cy=".3" r=".75"><stop offset="0" stop-color="#fff" stop-opacity=".22"/><stop offset=".45" stop-color="#fff" stop-opacity="0"/><stop offset=".46" stop-color="#000" stop-opacity="0"/><stop offset="1" stop-color="#000" stop-opacity=".42"/></radialGradient>
<linearGradient id="baseS" x1="0" y1="0" x2="1" y2="0"><stop offset="0" stop-color="#fff" stop-opacity=".12"/><stop offset=".4" stop-color="#000" stop-opacity="0"/><stop offset="1" stop-color="#000" stop-opacity=".35"/></linearGradient>
<linearGradient id="wallS" x1="0" y1="0" x2="0" y2="1"><stop offset="0" stop-color="#000" stop-opacity="0"/><stop offset="1" stop-color="#000" stop-opacity=".4"/></linearGradient>
<linearGradient id="domeG" x1="0" y1="0" x2="1" y2=".9"><stop offset="0" stop-color="#a9a9ae"/><stop offset=".38" stop-color="#dcdce0"/><stop offset=".7" stop-color="#f2f2f4"/><stop offset="1" stop-color="#e0e0e4"/></linearGradient>
<linearGradient id="bandG" x1="0" y1="0" x2="1" y2="0"><stop offset="0" stop-color="#e6e8ea"/><stop offset=".55" stop-color="#d4d7da"/><stop offset="1" stop-color="#9ca0a4"/></linearGradient>
<filter id="wood" x="0" y="0" width="100%" height="100%"><feTurbulence type="fractalNoise" baseFrequency="0.035 0.42" numOctaves="3" seed="7"/><feColorMatrix type="matrix" values="0 0 0 0 0  0 0 0 0 0  0 0 0 0 0  1.3 0 0 0 -0.5"/></filter>
<clipPath id="woodC"><circle cx="64" cy="41" r="39.3"/><ellipse cx="64.3" cy="97" rx="43.4" ry="16.3"/><ellipse cx="64.3" cy="90" rx="44.5" ry="14"/><path d="M43 70 Q44.5 80.5 32.8 85.6 L95.8 85.6 Q84 80.5 85.5 70Z"/><path d="M4.2 72.7 L30 83.2 L22 89.6Z"/><path d="M124.2 72.8 L100 82.4 L109 90Z"/></clipPath>
</defs></svg>
<div style="left:205px;top:122px;width:586px;height:554px;overflow:hidden">
<div class="tile" style="left:10px;top:10px"><svg style="left:0;top:0;color:#dcb278" width="128" height="120" viewBox="0 0 128 120"><rect width="128" height="120" fill="url(#bgG)"/><rect width="128" height="120" fill="url(#chk)"/><ellipse cx="18" cy="56" rx="30" ry="26" fill="#fff" opacity=".22" filter="url(#bl3)"/><ellipse cx="107" cy="72" rx="24" ry="28" fill="#000" opacity=".25" filter="url(#bl3)"/><ellipse cx="80" cy="104" rx="44" ry="7" fill="#000" opacity=".24" filter="url(#bl3)"/><path d="M4.2 72.7 L30 83.2 L22 89.6Z" fill="currentColor"/><path d="M4.2 72.7 L22 89.6 L21.5 84Z" fill="#000" opacity=".3"/><path d="M4.2 72.7 L30 83.2 L23 81.4Z" fill="#fff" opacity=".2"/><path d="M124.2 72.8 L100 82.4 L109 90Z" fill="currentColor"/><path d="M124.2 72.8 L109 90 L105 85.5Z" fill="#000" opacity=".36"/><path d="M124.2 72.8 L100 82.4 L106 82Z" fill="#fff" opacity=".12"/><ellipse cx="64.3" cy="97" rx="43.4" ry="16.3" fill="currentColor"/><ellipse cx="64.3" cy="97" rx="43.4" ry="16.3" fill="url(#wallS)"/><ellipse cx="64.3" cy="90" rx="44.5" ry="14" fill="currentColor"/><ellipse cx="64.3" cy="90" rx="44.5" ry="14" fill="url(#baseS)"/><ellipse cx="64.3" cy="90" rx="44.5" ry="14" fill="#fff" opacity=".1"/><path d="M34.6 94.2 L41.6 92.4 L41.8 99.6Z M94.6 94.2 L87.4 92.4 L87.4 100Z" fill="#000" opacity=".28"/><ellipse cx="64.3" cy="86.8" rx="33.4" ry="13" fill="#000" opacity=".42"/><ellipse cx="64.3" cy="85.6" rx="31.6" ry="12.4" fill="currentColor"/><ellipse cx="64.3" cy="85.6" rx="31.6" ry="12.4" fill="url(#baseS)"/><path d="M43 70 Q44.5 80.5 32.8 85.6 L95.8 85.6 Q84 80.5 85.5 70Z" fill="currentColor"/><path d="M43 70 Q44.5 80.5 32.8 85.6 L95.8 85.6 Q84 80.5 85.5 70Z" fill="url(#baseS)"/><ellipse cx="67" cy="78.6" rx="25" ry="5.4" fill="#000" opacity=".4" filter="url(#bl1)"/><circle cx="64" cy="41" r="39.3" fill="currentColor"/><circle cx="64" cy="41" r="39.3" fill="url(#sphS)"/><g clip-path="url(#woodC)"><rect width="128" height="120" filter="url(#wood)" opacity=".2" transform="rotate(8 64 60)"/></g><path d="M64 4.7 Q84 15 89.3 42.6 Q64 51.5 40 42.6 Q44.5 15 64 4.7Z" fill="currentColor"/><path d="M64 4.7 Q84 15 89.3 42.6 L83.2 40.6 Q79 22 63.8 12.6Z" fill="#fff" opacity=".22"/><path d="M64 4.7 Q44.5 15 40 42.6 L45 41.6 Q50 22 63.8 12.6Z" fill="#000" opacity=".42"/><path d="M89.3 42.6 Q64 51.5 40 42.6 L45 41.6 Q64 48 83.2 40.6Z" fill="#fff" opacity=".14"/><path d="M63.8 12.6 Q79 22 83.2 40.6 Q64 48 45 41.6 Q50 22 63.8 12.6Z" fill="url(#domeG)"/><text x="64.2" y="23.6" text-anchor="middle" font-family="'Liberation Sans',sans-serif" font-weight="bold" font-size="5.6" fill="#222" opacity=".85">TZ</text><rect x="60" y="25.6" width="8.4" height="1.5" fill="#333" opacity=".75"/><rect x="57" y="30.2" width="14.5" height="4.6" rx="1.2" fill="#62b6ea" opacity=".8"/><rect x="58.5" y="37.6" width="12" height=".9" fill="#888" opacity=".6"/><path d="M24.8 43.6 C24.8 56.1 103.2 58.1 103.2 45.6 L103.3 49 C103.2 61.1 24.8 59.1 24.9 47Z" fill="url(#bandG)"/><path d="M33 51.2 l9 2.6 M56 55.9 l15 .3 M84 54.6 l9 -2.7" stroke="#6a7884" stroke-width=".9" opacity=".55" fill="none"/></svg><div class="lb"><span class="a">1 (VRayMtl)</span></div></div>
<div class="tile" style="left:150px;top:10px"><svg style="left:0;top:0;color:#e8dfc8" width="128" height="120" viewBox="0 0 128 120"><rect width="128" height="120" fill="url(#bgG)"/><rect width="128" height="120" fill="url(#chk)"/><ellipse cx="18" cy="56" rx="30" ry="26" fill="#fff" opacity=".22" filter="url(#bl3)"/><ellipse cx="107" cy="72" rx="24" ry="28" fill="#000" opacity=".25" filter="url(#bl3)"/><ellipse cx="80" cy="104" rx="44" ry="7" fill="#000" opacity=".24" filter="url(#bl3)"/><path d="M4.2 72.7 L30 83.2 L22 89.6Z" fill="currentColor"/><path d="M4.2 72.7 L22 89.6 L21.5 84Z" fill="#000" opacity=".3"/><path d="M4.2 72.7 L30 83.2 L23 81.4Z" fill="#fff" opacity=".2"/><path d="M124.2 72.8 L100 82.4 L109 90Z" fill="currentColor"/><path d="M124.2 72.8 L109 90 L105 85.5Z" fill="#000" opacity=".36"/><path d="M124.2 72.8 L100 82.4 L106 82Z" fill="#fff" opacity=".12"/><ellipse cx="64.3" cy="97" rx="43.4" ry="16.3" fill="currentColor"/><ellipse cx="64.3" cy="97" rx="43.4" ry="16.3" fill="url(#wallS)"/><ellipse cx="64.3" cy="90" rx="44.5" ry="14" fill="currentColor"/><ellipse cx="64.3" cy="90" rx="44.5" ry="14" fill="url(#baseS)"/><ellipse cx="64.3" cy="90" rx="44.5" ry="14" fill="#fff" opacity=".1"/><path d="M34.6 94.2 L41.6 92.4 L41.8 99.6Z M94.6 94.2 L87.4 92.4 L87.4 100Z" fill="#000" opacity=".28"/><ellipse cx="64.3" cy="86.8" rx="33.4" ry="13" fill="#000" opacity=".42"/><ellipse cx="64.3" cy="85.6" rx="31.6" ry="12.4" fill="currentColor"/><ellipse cx="64.3" cy="85.6" rx="31.6" ry="12.4" fill="url(#baseS)"/><path d="M43 70 Q44.5 80.5 32.8 85.6 L95.8 85.6 Q84 80.5 85.5 70Z" fill="currentColor"/><path d="M43 70 Q44.5 80.5 32.8 85.6 L95.8 85.6 Q84 80.5 85.5 70Z" fill="url(#baseS)"/><ellipse cx="67" cy="78.6" rx="25" ry="5.4" fill="#000" opacity=".4" filter="url(#bl1)"/><circle cx="64" cy="41" r="39.3" fill="currentColor"/><circle cx="64" cy="41" r="39.3" fill="url(#sphS)"/><g clip-path="url(#woodC)"><rect width="128" height="120" filter="url(#wood)" opacity=".2" transform="rotate(80 64 60)"/></g><path d="M64 4.7 Q84 15 89.3 42.6 Q64 51.5 40 42.6 Q44.5 15 64 4.7Z" fill="currentColor"/><path d="M64 4.7 Q84 15 89.3 42.6 L83.2 40.6 Q79 22 63.8 12.6Z" fill="#fff" opacity=".22"/><path d="M64 4.7 Q44.5 15 40 42.6 L45 41.6 Q50 22 63.8 12.6Z" fill="#000" opacity=".42"/><path d="M89.3 42.6 Q64 51.5 40 42.6 L45 41.6 Q64 48 83.2 40.6Z" fill="#fff" opacity=".14"/><path d="M63.8 12.6 Q79 22 83.2 40.6 Q64 48 45 41.6 Q50 22 63.8 12.6Z" fill="url(#domeG)"/><text x="64.2" y="23.6" text-anchor="middle" font-family="'Liberation Sans',sans-serif" font-weight="bold" font-size="5.6" fill="#222" opacity=".85">TZ</text><rect x="60" y="25.6" width="8.4" height="1.5" fill="#333" opacity=".75"/><rect x="57" y="30.2" width="14.5" height="4.6" rx="1.2" fill="#62b6ea" opacity=".8"/><rect x="58.5" y="37.6" width="12" height=".9" fill="#888" opacity=".6"/><path d="M24.8 43.6 C24.8 56.1 103.2 58.1 103.2 45.6 L103.3 49 C103.2 61.1 24.8 59.1 24.9 47Z" fill="url(#bandG)"/><path d="M33 51.2 l9 2.6 M56 55.9 l15 .3 M84 54.6 l9 -2.7" stroke="#6a7884" stroke-width=".9" opacity=".55" fill="none"/></svg><div class="lb"><span class="a">2 (VRayMtl)</span></div></div>
<div class="tile" style="left:290px;top:10px"><svg style="left:0;top:0;color:#d9b562" width="128" height="120" viewBox="0 0 128 120"><rect width="128" height="120" fill="url(#bgG)"/><rect width="128" height="120" fill="url(#chk)"/><ellipse cx="18" cy="56" rx="30" ry="26" fill="#fff" opacity=".22" filter="url(#bl3)"/><ellipse cx="107" cy="72" rx="24" ry="28" fill="#000" opacity=".25" filter="url(#bl3)"/><ellipse cx="80" cy="104" rx="44" ry="7" fill="#000" opacity=".24" filter="url(#bl3)"/><path d="M4.2 72.7 L30 83.2 L22 89.6Z" fill="currentColor"/><path d="M4.2 72.7 L22 89.6 L21.5 84Z" fill="#000" opacity=".3"/><path d="M4.2 72.7 L30 83.2 L23 81.4Z" fill="#fff" opacity=".2"/><path d="M124.2 72.8 L100 82.4 L109 90Z" fill="currentColor"/><path d="M124.2 72.8 L109 90 L105 85.5Z" fill="#000" opacity=".36"/><path d="M124.2 72.8 L100 82.4 L106 82Z" fill="#fff" opacity=".12"/><ellipse cx="64.3" cy="97" rx="43.4" ry="16.3" fill="currentColor"/><ellipse cx="64.3" cy="97" rx="43.4" ry="16.3" fill="url(#wallS)"/><ellipse cx="64.3" cy="90" rx="44.5" ry="14" fill="currentColor"/><ellipse cx="64.3" cy="90" rx="44.5" ry="14" fill="url(#baseS)"/><ellipse cx="64.3" cy="90" rx="44.5" ry="14" fill="#fff" opacity=".1"/><path d="M34.6 94.2 L41.6 92.4 L41.8 99.6Z M94.6 94.2 L87.4 92.4 L87.4 100Z" fill="#000" opacity=".28"/><ellipse cx="64.3" cy="86.8" rx="33.4" ry="13" fill="#000" opacity=".42"/><ellipse cx="64.3" cy="85.6" rx="31.6" ry="12.4" fill="currentColor"/><ellipse cx="64.3" cy="85.6" rx="31.6" ry="12.4" fill="url(#baseS)"/><path d="M43 70 Q44.5 80.5 32.8 85.6 L95.8 85.6 Q84 80.5 85.5 70Z" fill="currentColor"/><path d="M43 70 Q44.5 80.5 32.8 85.6 L95.8 85.6 Q84 80.5 85.5 70Z" fill="url(#baseS)"/><ellipse cx="67" cy="78.6" rx="25" ry="5.4" fill="#000" opacity=".4" filter="url(#bl1)"/><circle cx="64" cy="41" r="39.3" fill="currentColor"/><circle cx="64" cy="41" r="39.3" fill="url(#sphS)"/><g clip-path="url(#woodC)"><rect width="128" height="120" filter="url(#wood)" opacity=".2" transform="rotate(-20 64 60)"/></g><path d="M64 4.7 Q84 15 89.3 42.6 Q64 51.5 40 42.6 Q44.5 15 64 4.7Z" fill="currentColor"/><path d="M64 4.7 Q84 15 89.3 42.6 L83.2 40.6 Q79 22 63.8 12.6Z" fill="#fff" opacity=".22"/><path d="M64 4.7 Q44.5 15 40 42.6 L45 41.6 Q50 22 63.8 12.6Z" fill="#000" opacity=".42"/><path d="M89.3 42.6 Q64 51.5 40 42.6 L45 41.6 Q64 48 83.2 40.6Z" fill="#fff" opacity=".14"/><path d="M63.8 12.6 Q79 22 83.2 40.6 Q64 48 45 41.6 Q50 22 63.8 12.6Z" fill="url(#domeG)"/><text x="64.2" y="23.6" text-anchor="middle" font-family="'Liberation Sans',sans-serif" font-weight="bold" font-size="5.6" fill="#222" opacity=".85">TZ</text><rect x="60" y="25.6" width="8.4" height="1.5" fill="#333" opacity=".75"/><rect x="57" y="30.2" width="14.5" height="4.6" rx="1.2" fill="#62b6ea" opacity=".8"/><rect x="58.5" y="37.6" width="12" height=".9" fill="#888" opacity=".6"/><path d="M24.8 43.6 C24.8 56.1 103.2 58.1 103.2 45.6 L103.3 49 C103.2 61.1 24.8 59.1 24.9 47Z" fill="url(#bandG)"/><path d="M33 51.2 l9 2.6 M56 55.9 l15 .3 M84 54.6 l9 -2.7" stroke="#6a7884" stroke-width=".9" opacity=".55" fill="none"/></svg><div class="lb"><span class="a">3 (VRayMtl)</span></div></div>
<div class="tile" style="left:430px;top:10px"><svg style="left:0;top:0;color:#e2ccb4" width="128" height="120" viewBox="0 0 128 120"><rect width="128" height="120" fill="url(#bgG)"/><rect width="128" height="120" fill="url(#chk)"/><ellipse cx="18" cy="56" rx="30" ry="26" fill="#fff" opacity=".22" filter="url(#bl3)"/><ellipse cx="107" cy="72" rx="24" ry="28" fill="#000" opacity=".25" filter="url(#bl3)"/><ellipse cx="80" cy="104" rx="44" ry="7" fill="#000" opacity=".24" filter="url(#bl3)"/><path d="M4.2 72.7 L30 83.2 L22 89.6Z" fill="currentColor"/><path d="M4.2 72.7 L22 89.6 L21.5 84Z" fill="#000" opacity=".3"/><path d="M4.2 72.7 L30 83.2 L23 81.4Z" fill="#fff" opacity=".2"/><path d="M124.2 72.8 L100 82.4 L109 90Z" fill="currentColor"/><path d="M124.2 72.8 L109 90 L105 85.5Z" fill="#000" opacity=".36"/><path d="M124.2 72.8 L100 82.4 L106 82Z" fill="#fff" opacity=".12"/><ellipse cx="64.3" cy="97" rx="43.4" ry="16.3" fill="currentColor"/><ellipse cx="64.3" cy="97" rx="43.4" ry="16.3" fill="url(#wallS)"/><ellipse cx="64.3" cy="90" rx="44.5" ry="14" fill="currentColor"/><ellipse cx="64.3" cy="90" rx="44.5" ry="14" fill="url(#baseS)"/><ellipse cx="64.3" cy="90" rx="44.5" ry="14" fill="#fff" opacity=".1"/><path d="M34.6 94.2 L41.6 92.4 L41.8 99.6Z M94.6 94.2 L87.4 92.4 L87.4 100Z" fill="#000" opacity=".28"/><ellipse cx="64.3" cy="86.8" rx="33.4" ry="13" fill="#000" opacity=".42"/><ellipse cx="64.3" cy="85.6" rx="31.6" ry="12.4" fill="currentColor"/><ellipse cx="64.3" cy="85.6" rx="31.6" ry="12.4" fill="url(#baseS)"/><path d="M43 70 Q44.5 80.5 32.8 85.6 L95.8 85.6 Q84 80.5 85.5 70Z" fill="currentColor"/><path d="M43 70 Q44.5 80.5 32.8 85.6 L95.8 85.6 Q84 80.5 85.5 70Z" fill="url(#baseS)"/><ellipse cx="67" cy="78.6" rx="25" ry="5.4" fill="#000" opacity=".4" filter="url(#bl1)"/><circle cx="64" cy="41" r="39.3" fill="currentColor"/><circle cx="64" cy="41" r="39.3" fill="url(#sphS)"/><g clip-path="url(#woodC)"><rect width="128" height="120" filter="url(#wood)" opacity=".2" transform="rotate(85 64 60)"/></g><path d="M64 4.7 Q84 15 89.3 42.6 Q64 51.5 40 42.6 Q44.5 15 64 4.7Z" fill="currentColor"/><path d="M64 4.7 Q84 15 89.3 42.6 L83.2 40.6 Q79 22 63.8 12.6Z" fill="#fff" opacity=".22"/><path d="M64 4.7 Q44.5 15 40 42.6 L45 41.6 Q50 22 63.8 12.6Z" fill="#000" opacity=".42"/><path d="M89.3 42.6 Q64 51.5 40 42.6 L45 41.6 Q64 48 83.2 40.6Z" fill="#fff" opacity=".14"/><path d="M63.8 12.6 Q79 22 83.2 40.6 Q64 48 45 41.6 Q50 22 63.8 12.6Z" fill="url(#domeG)"/><text x="64.2" y="23.6" text-anchor="middle" font-family="'Liberation Sans',sans-serif" font-weight="bold" font-size="5.6" fill="#222" opacity=".85">TZ</text><rect x="60" y="25.6" width="8.4" height="1.5" fill="#333" opacity=".75"/><rect x="57" y="30.2" width="14.5" height="4.6" rx="1.2" fill="#62b6ea" opacity=".8"/><rect x="58.5" y="37.6" width="12" height=".9" fill="#888" opacity=".6"/><path d="M24.8 43.6 C24.8 56.1 103.2 58.1 103.2 45.6 L103.3 49 C103.2 61.1 24.8 59.1 24.9 47Z" fill="url(#bandG)"/><path d="M33 51.2 l9 2.6 M56 55.9 l15 .3 M84 54.6 l9 -2.7" stroke="#6a7884" stroke-width=".9" opacity=".55" fill="none"/></svg><div class="lb"><span class="a">4 (VRayMtl)</span></div></div>
<div class="tile" style="left:10px;top:162px"><svg style="left:0;top:0;color:#d8d7cc" width="128" height="120" viewBox="0 0 128 120"><rect width="128" height="120" fill="url(#bgG)"/><rect width="128" height="120" fill="url(#chk)"/><ellipse cx="18" cy="56" rx="30" ry="26" fill="#fff" opacity=".22" filter="url(#bl3)"/><ellipse cx="107" cy="72" rx="24" ry="28" fill="#000" opacity=".25" filter="url(#bl3)"/><ellipse cx="80" cy="104" rx="44" ry="7" fill="#000" opacity=".24" filter="url(#bl3)"/><path d="M4.2 72.7 L30 83.2 L22 89.6Z" fill="currentColor"/><path d="M4.2 72.7 L22 89.6 L21.5 84Z" fill="#000" opacity=".3"/><path d="M4.2 72.7 L30 83.2 L23 81.4Z" fill="#fff" opacity=".2"/><path d="M124.2 72.8 L100 82.4 L109 90Z" fill="currentColor"/><path d="M124.2 72.8 L109 90 L105 85.5Z" fill="#000" opacity=".36"/><path d="M124.2 72.8 L100 82.4 L106 82Z" fill="#fff" opacity=".12"/><ellipse cx="64.3" cy="97" rx="43.4" ry="16.3" fill="currentColor"/><ellipse cx="64.3" cy="97" rx="43.4" ry="16.3" fill="url(#wallS)"/><ellipse cx="64.3" cy="90" rx="44.5" ry="14" fill="currentColor"/><ellipse cx="64.3" cy="90" rx="44.5" ry="14" fill="url(#baseS)"/><ellipse cx="64.3" cy="90" rx="44.5" ry="14" fill="#fff" opacity=".1"/><path d="M34.6 94.2 L41.6 92.4 L41.8 99.6Z M94.6 94.2 L87.4 92.4 L87.4 100Z" fill="#000" opacity=".28"/><ellipse cx="64.3" cy="86.8" rx="33.4" ry="13" fill="#000" opacity=".42"/><ellipse cx="64.3" cy="85.6" rx="31.6" ry="12.4" fill="currentColor"/><ellipse cx="64.3" cy="85.6" rx="31.6" ry="12.4" fill="url(#baseS)"/><path d="M43 70 Q44.5 80.5 32.8 85.6 L95.8 85.6 Q84 80.5 85.5 70Z" fill="currentColor"/><path d="M43 70 Q44.5 80.5 32.8 85.6 L95.8 85.6 Q84 80.5 85.5 70Z" fill="url(#baseS)"/><ellipse cx="67" cy="78.6" rx="25" ry="5.4" fill="#000" opacity=".4" filter="url(#bl1)"/><circle cx="64" cy="41" r="39.3" fill="currentColor"/><circle cx="64" cy="41" r="39.3" fill="url(#sphS)"/><g clip-path="url(#woodC)"><rect width="128" height="120" filter="url(#wood)" opacity=".2" transform="rotate(75 64 60)"/></g><path d="M64 4.7 Q84 15 89.3 42.6 Q64 51.5 40 42.6 Q44.5 15 64 4.7Z" fill="currentColor"/><path d="M64 4.7 Q84 15 89.3 42.6 L83.2 40.6 Q79 22 63.8 12.6Z" fill="#fff" opacity=".22"/><path d="M64 4.7 Q44.5 15 40 42.6 L45 41.6 Q50 22 63.8 12.6Z" fill="#000" opacity=".42"/><path d="M89.3 42.6 Q64 51.5 40 42.6 L45 41.6 Q64 48 83.2 40.6Z" fill="#fff" opacity=".14"/><path d="M63.8 12.6 Q79 22 83.2 40.6 Q64 48 45 41.6 Q50 22 63.8 12.6Z" fill="url(#domeG)"/><text x="64.2" y="23.6" text-anchor="middle" font-family="'Liberation Sans',sans-serif" font-weight="bold" font-size="5.6" fill="#222" opacity=".85">TZ</text><rect x="60" y="25.6" width="8.4" height="1.5" fill="#333" opacity=".75"/><rect x="57" y="30.2" width="14.5" height="4.6" rx="1.2" fill="#62b6ea" opacity=".8"/><rect x="58.5" y="37.6" width="12" height=".9" fill="#888" opacity=".6"/><path d="M24.8 43.6 C24.8 56.1 103.2 58.1 103.2 45.6 L103.3 49 C103.2 61.1 24.8 59.1 24.9 47Z" fill="url(#bandG)"/><path d="M33 51.2 l9 2.6 M56 55.9 l15 .3 M84 54.6 l9 -2.7" stroke="#6a7884" stroke-width=".9" opacity=".55" fill="none"/></svg><div class="lb"><span class="a">5 (VRayMtl)</span></div></div>
<div class="tile" style="left:150px;top:162px"><svg style="left:0;top:0;color:#bcab9b" width="128" height="120" viewBox="0 0 128 120"><rect width="128" height="120" fill="url(#bgG)"/><rect width="128" height="120" fill="url(#chk)"/><ellipse cx="18" cy="56" rx="30" ry="26" fill="#fff" opacity=".22" filter="url(#bl3)"/><ellipse cx="107" cy="72" rx="24" ry="28" fill="#000" opacity=".25" filter="url(#bl3)"/><ellipse cx="80" cy="104" rx="44" ry="7" fill="#000" opacity=".24" filter="url(#bl3)"/><path d="M4.2 72.7 L30 83.2 L22 89.6Z" fill="currentColor"/><path d="M4.2 72.7 L22 89.6 L21.5 84Z" fill="#000" opacity=".3"/><path d="M4.2 72.7 L30 83.2 L23 81.4Z" fill="#fff" opacity=".2"/><path d="M124.2 72.8 L100 82.4 L109 90Z" fill="currentColor"/><path d="M124.2 72.8 L109 90 L105 85.5Z" fill="#000" opacity=".36"/><path d="M124.2 72.8 L100 82.4 L106 82Z" fill="#fff" opacity=".12"/><ellipse cx="64.3" cy="97" rx="43.4" ry="16.3" fill="currentColor"/><ellipse cx="64.3" cy="97" rx="43.4" ry="16.3" fill="url(#wallS)"/><ellipse cx="64.3" cy="90" rx="44.5" ry="14" fill="currentColor"/><ellipse cx="64.3" cy="90" rx="44.5" ry="14" fill="url(#baseS)"/><ellipse cx="64.3" cy="90" rx="44.5" ry="14" fill="#fff" opacity=".1"/><path d="M34.6 94.2 L41.6 92.4 L41.8 99.6Z M94.6 94.2 L87.4 92.4 L87.4 100Z" fill="#000" opacity=".28"/><ellipse cx="64.3" cy="86.8" rx="33.4" ry="13" fill="#000" opacity=".42"/><ellipse cx="64.3" cy="85.6" rx="31.6" ry="12.4" fill="currentColor"/><ellipse cx="64.3" cy="85.6" rx="31.6" ry="12.4" fill="url(#baseS)"/><path d="M43 70 Q44.5 80.5 32.8 85.6 L95.8 85.6 Q84 80.5 85.5 70Z" fill="currentColor"/><path d="M43 70 Q44.5 80.5 32.8 85.6 L95.8 85.6 Q84 80.5 85.5 70Z" fill="url(#baseS)"/><ellipse cx="67" cy="78.6" rx="25" ry="5.4" fill="#000" opacity=".4" filter="url(#bl1)"/><circle cx="64" cy="41" r="39.3" fill="currentColor"/><circle cx="64" cy="41" r="39.3" fill="url(#sphS)"/><g clip-path="url(#woodC)"><rect width="128" height="120" filter="url(#wood)" opacity=".2" transform="rotate(88 64 60)"/></g><path d="M64 4.7 Q84 15 89.3 42.6 Q64 51.5 40 42.6 Q44.5 15 64 4.7Z" fill="currentColor"/><path d="M64 4.7 Q84 15 89.3 42.6 L83.2 40.6 Q79 22 63.8 12.6Z" fill="#fff" opacity=".22"/><path d="M64 4.7 Q44.5 15 40 42.6 L45 41.6 Q50 22 63.8 12.6Z" fill="#000" opacity=".42"/><path d="M89.3 42.6 Q64 51.5 40 42.6 L45 41.6 Q64 48 83.2 40.6Z" fill="#fff" opacity=".14"/><path d="M63.8 12.6 Q79 22 83.2 40.6 Q64 48 45 41.6 Q50 22 63.8 12.6Z" fill="url(#domeG)"/><text x="64.2" y="23.6" text-anchor="middle" font-family="'Liberation Sans',sans-serif" font-weight="bold" font-size="5.6" fill="#222" opacity=".85">TZ</text><rect x="60" y="25.6" width="8.4" height="1.5" fill="#333" opacity=".75"/><rect x="57" y="30.2" width="14.5" height="4.6" rx="1.2" fill="#62b6ea" opacity=".8"/><rect x="58.5" y="37.6" width="12" height=".9" fill="#888" opacity=".6"/><path d="M24.8 43.6 C24.8 56.1 103.2 58.1 103.2 45.6 L103.3 49 C103.2 61.1 24.8 59.1 24.9 47Z" fill="url(#bandG)"/><path d="M33 51.2 l9 2.6 M56 55.9 l15 .3 M84 54.6 l9 -2.7" stroke="#6a7884" stroke-width=".9" opacity=".55" fill="none"/></svg><div class="lb"><span class="a">6 (VRayMtl)</span></div></div>
<div class="tile" style="left:290px;top:162px"><svg style="left:0;top:0;color:#dfb95a" width="128" height="120" viewBox="0 0 128 120"><rect width="128" height="120" fill="url(#bgG)"/><rect width="128" height="120" fill="url(#chk)"/><ellipse cx="18" cy="56" rx="30" ry="26" fill="#fff" opacity=".22" filter="url(#bl3)"/><ellipse cx="107" cy="72" rx="24" ry="28" fill="#000" opacity=".25" filter="url(#bl3)"/><ellipse cx="80" cy="104" rx="44" ry="7" fill="#000" opacity=".24" filter="url(#bl3)"/><path d="M4.2 72.7 L30 83.2 L22 89.6Z" fill="currentColor"/><path d="M4.2 72.7 L22 89.6 L21.5 84Z" fill="#000" opacity=".3"/><path d="M4.2 72.7 L30 83.2 L23 81.4Z" fill="#fff" opacity=".2"/><path d="M124.2 72.8 L100 82.4 L109 90Z" fill="currentColor"/><path d="M124.2 72.8 L109 90 L105 85.5Z" fill="#000" opacity=".36"/><path d="M124.2 72.8 L100 82.4 L106 82Z" fill="#fff" opacity=".12"/><ellipse cx="64.3" cy="97" rx="43.4" ry="16.3" fill="currentColor"/><ellipse cx="64.3" cy="97" rx="43.4" ry="16.3" fill="url(#wallS)"/><ellipse cx="64.3" cy="90" rx="44.5" ry="14" fill="currentColor"/><ellipse cx="64.3" cy="90" rx="44.5" ry="14" fill="url(#baseS)"/><ellipse cx="64.3" cy="90" rx="44.5" ry="14" fill="#fff" opacity=".1"/><path d="M34.6 94.2 L41.6 92.4 L41.8 99.6Z M94.6 94.2 L87.4 92.4 L87.4 100Z" fill="#000" opacity=".28"/><ellipse cx="64.3" cy="86.8" rx="33.4" ry="13" fill="#000" opacity=".42"/><ellipse cx="64.3" cy="85.6" rx="31.6" ry="12.4" fill="currentColor"/><ellipse cx="64.3" cy="85.6" rx="31.6" ry="12.4" fill="url(#baseS)"/><path d="M43 70 Q44.5 80.5 32.8 85.6 L95.8 85.6 Q84 80.5 85.5 70Z" fill="currentColor"/><path d="M43 70 Q44.5 80.5 32.8 85.6 L95.8 85.6 Q84 80.5 85.5 70Z" fill="url(#baseS)"/><ellipse cx="67" cy="78.6" rx="25" ry="5.4" fill="#000" opacity=".4" filter="url(#bl1)"/><circle cx="64" cy="41" r="39.3" fill="currentColor"/><circle cx="64" cy="41" r="39.3" fill="url(#sphS)"/><g clip-path="url(#woodC)"><rect width="128" height="120" filter="url(#wood)" opacity=".2" transform="rotate(10 64 60)"/></g><path d="M64 4.7 Q84 15 89.3 42.6 Q64 51.5 40 42.6 Q44.5 15 64 4.7Z" fill="currentColor"/><path d="M64 4.7 Q84 15 89.3 42.6 L83.2 40.6 Q79 22 63.8 12.6Z" fill="#fff" opacity=".22"/><path d="M64 4.7 Q44.5 15 40 42.6 L45 41.6 Q50 22 63.8 12.6Z" fill="#000" opacity=".42"/><path d="M89.3 42.6 Q64 51.5 40 42.6 L45 41.6 Q64 48 83.2 40.6Z" fill="#fff" opacity=".14"/><path d="M63.8 12.6 Q79 22 83.2 40.6 Q64 48 45 41.6 Q50 22 63.8 12.6Z" fill="url(#domeG)"/><text x="64.2" y="23.6" text-anchor="middle" font-family="'Liberation Sans',sans-serif" font-weight="bold" font-size="5.6" fill="#222" opacity=".85">TZ</text><rect x="60" y="25.6" width="8.4" height="1.5" fill="#333" opacity=".75"/><rect x="57" y="30.2" width="14.5" height="4.6" rx="1.2" fill="#62b6ea" opacity=".8"/><rect x="58.5" y="37.6" width="12" height=".9" fill="#888" opacity=".6"/><path d="M24.8 43.6 C24.8 56.1 103.2 58.1 103.2 45.6 L103.3 49 C103.2 61.1 24.8 59.1 24.9 47Z" fill="url(#bandG)"/><path d="M33 51.2 l9 2.6 M56 55.9 l15 .3 M84 54.6 l9 -2.7" stroke="#6a7884" stroke-width=".9" opacity=".55" fill="none"/></svg><div class="lb"><span class="a">7 (VRayMtl)</span></div></div>
<div class="tile" style="left:430px;top:162px"><svg style="left:0;top:0;color:#c6c6be" width="128" height="120" viewBox="0 0 128 120"><rect width="128" height="120" fill="url(#bgG)"/><rect width="128" height="120" fill="url(#chk)"/><ellipse cx="18" cy="56" rx="30" ry="26" fill="#fff" opacity=".22" filter="url(#bl3)"/><ellipse cx="107" cy="72" rx="24" ry="28" fill="#000" opacity=".25" filter="url(#bl3)"/><ellipse cx="80" cy="104" rx="44" ry="7" fill="#000" opacity=".24" filter="url(#bl3)"/><path d="M4.2 72.7 L30 83.2 L22 89.6Z" fill="currentColor"/><path d="M4.2 72.7 L22 89.6 L21.5 84Z" fill="#000" opacity=".3"/><path d="M4.2 72.7 L30 83.2 L23 81.4Z" fill="#fff" opacity=".2"/><path d="M124.2 72.8 L100 82.4 L109 90Z" fill="currentColor"/><path d="M124.2 72.8 L109 90 L105 85.5Z" fill="#000" opacity=".36"/><path d="M124.2 72.8 L100 82.4 L106 82Z" fill="#fff" opacity=".12"/><ellipse cx="64.3" cy="97" rx="43.4" ry="16.3" fill="currentColor"/><ellipse cx="64.3" cy="97" rx="43.4" ry="16.3" fill="url(#wallS)"/><ellipse cx="64.3" cy="90" rx="44.5" ry="14" fill="currentColor"/><ellipse cx="64.3" cy="90" rx="44.5" ry="14" fill="url(#baseS)"/><ellipse cx="64.3" cy="90" rx="44.5" ry="14" fill="#fff" opacity=".1"/><path d="M34.6 94.2 L41.6 92.4 L41.8 99.6Z M94.6 94.2 L87.4 92.4 L87.4 100Z" fill="#000" opacity=".28"/><ellipse cx="64.3" cy="86.8" rx="33.4" ry="13" fill="#000" opacity=".42"/><ellipse cx="64.3" cy="85.6" rx="31.6" ry="12.4" fill="currentColor"/><ellipse cx="64.3" cy="85.6" rx="31.6" ry="12.4" fill="url(#baseS)"/><path d="M43 70 Q44.5 80.5 32.8 85.6 L95.8 85.6 Q84 80.5 85.5 70Z" fill="currentColor"/><path d="M43 70 Q44.5 80.5 32.8 85.6 L95.8 85.6 Q84 80.5 85.5 70Z" fill="url(#baseS)"/><ellipse cx="67" cy="78.6" rx="25" ry="5.4" fill="#000" opacity=".4" filter="url(#bl1)"/><circle cx="64" cy="41" r="39.3" fill="currentColor"/><circle cx="64" cy="41" r="39.3" fill="url(#sphS)"/><g clip-path="url(#woodC)"><rect width="128" height="120" filter="url(#wood)" opacity=".2" transform="rotate(80 64 60)"/></g><path d="M64 4.7 Q84 15 89.3 42.6 Q64 51.5 40 42.6 Q44.5 15 64 4.7Z" fill="currentColor"/><path d="M64 4.7 Q84 15 89.3 42.6 L83.2 40.6 Q79 22 63.8 12.6Z" fill="#fff" opacity=".22"/><path d="M64 4.7 Q44.5 15 40 42.6 L45 41.6 Q50 22 63.8 12.6Z" fill="#000" opacity=".42"/><path d="M89.3 42.6 Q64 51.5 40 42.6 L45 41.6 Q64 48 83.2 40.6Z" fill="#fff" opacity=".14"/><path d="M63.8 12.6 Q79 22 83.2 40.6 Q64 48 45 41.6 Q50 22 63.8 12.6Z" fill="url(#domeG)"/><text x="64.2" y="23.6" text-anchor="middle" font-family="'Liberation Sans',sans-serif" font-weight="bold" font-size="5.6" fill="#222" opacity=".85">TZ</text><rect x="60" y="25.6" width="8.4" height="1.5" fill="#333" opacity=".75"/><rect x="57" y="30.2" width="14.5" height="4.6" rx="1.2" fill="#62b6ea" opacity=".8"/><rect x="58.5" y="37.6" width="12" height=".9" fill="#888" opacity=".6"/><path d="M24.8 43.6 C24.8 56.1 103.2 58.1 103.2 45.6 L103.3 49 C103.2 61.1 24.8 59.1 24.9 47Z" fill="url(#bandG)"/><path d="M33 51.2 l9 2.6 M56 55.9 l15 .3 M84 54.6 l9 -2.7" stroke="#6a7884" stroke-width=".9" opacity=".55" fill="none"/></svg><div class="lb"><span class="a">8 (VRayMtl)</span></div></div>
<div class="tile" style="left:10px;top:314px"><svg style="left:0;top:0;color:#847e82" width="128" height="120" viewBox="0 0 128 120"><rect width="128" height="120" fill="url(#bgG)"/><rect width="128" height="120" fill="url(#chk)"/><ellipse cx="18" cy="56" rx="30" ry="26" fill="#fff" opacity=".22" filter="url(#bl3)"/><ellipse cx="107" cy="72" rx="24" ry="28" fill="#000" opacity=".25" filter="url(#bl3)"/><ellipse cx="80" cy="104" rx="44" ry="7" fill="#000" opacity=".24" filter="url(#bl3)"/><path d="M4.2 72.7 L30 83.2 L22 89.6Z" fill="currentColor"/><path d="M4.2 72.7 L22 89.6 L21.5 84Z" fill="#000" opacity=".3"/><path d="M4.2 72.7 L30 83.2 L23 81.4Z" fill="#fff" opacity=".2"/><path d="M124.2 72.8 L100 82.4 L109 90Z" fill="currentColor"/><path d="M124.2 72.8 L109 90 L105 85.5Z" fill="#000" opacity=".36"/><path d="M124.2 72.8 L100 82.4 L106 82Z" fill="#fff" opacity=".12"/><ellipse cx="64.3" cy="97" rx="43.4" ry="16.3" fill="currentColor"/><ellipse cx="64.3" cy="97" rx="43.4" ry="16.3" fill="url(#wallS)"/><ellipse cx="64.3" cy="90" rx="44.5" ry="14" fill="currentColor"/><ellipse cx="64.3" cy="90" rx="44.5" ry="14" fill="url(#baseS)"/><ellipse cx="64.3" cy="90" rx="44.5" ry="14" fill="#fff" opacity=".1"/><path d="M34.6 94.2 L41.6 92.4 L41.8 99.6Z M94.6 94.2 L87.4 92.4 L87.4 100Z" fill="#000" opacity=".28"/><ellipse cx="64.3" cy="86.8" rx="33.4" ry="13" fill="#000" opacity=".42"/><ellipse cx="64.3" cy="85.6" rx="31.6" ry="12.4" fill="currentColor"/><ellipse cx="64.3" cy="85.6" rx="31.6" ry="12.4" fill="url(#baseS)"/><path d="M43 70 Q44.5 80.5 32.8 85.6 L95.8 85.6 Q84 80.5 85.5 70Z" fill="currentColor"/><path d="M43 70 Q44.5 80.5 32.8 85.6 L95.8 85.6 Q84 80.5 85.5 70Z" fill="url(#baseS)"/><ellipse cx="67" cy="78.6" rx="25" ry="5.4" fill="#000" opacity=".4" filter="url(#bl1)"/><circle cx="64" cy="41" r="39.3" fill="currentColor"/><circle cx="64" cy="41" r="39.3" fill="url(#sphS)"/><g clip-path="url(#woodC)"><rect width="128" height="120" filter="url(#wood)" opacity=".2" transform="rotate(-15 64 60)"/></g><path d="M64 4.7 Q84 15 89.3 42.6 Q64 51.5 40 42.6 Q44.5 15 64 4.7Z" fill="currentColor"/><path d="M64 4.7 Q84 15 89.3 42.6 L83.2 40.6 Q79 22 63.8 12.6Z" fill="#fff" opacity=".22"/><path d="M64 4.7 Q44.5 15 40 42.6 L45 41.6 Q50 22 63.8 12.6Z" fill="#000" opacity=".42"/><path d="M89.3 42.6 Q64 51.5 40 42.6 L45 41.6 Q64 48 83.2 40.6Z" fill="#fff" opacity=".14"/><path d="M63.8 12.6 Q79 22 83.2 40.6 Q64 48 45 41.6 Q50 22 63.8 12.6Z" fill="url(#domeG)"/><text x="64.2" y="23.6" text-anchor="middle" font-family="'Liberation Sans',sans-serif" font-weight="bold" font-size="5.6" fill="#222" opacity=".85">TZ</text><rect x="60" y="25.6" width="8.4" height="1.5" fill="#333" opacity=".75"/><rect x="57" y="30.2" width="14.5" height="4.6" rx="1.2" fill="#62b6ea" opacity=".8"/><rect x="58.5" y="37.6" width="12" height=".9" fill="#888" opacity=".6"/><path d="M24.8 43.6 C24.8 56.1 103.2 58.1 103.2 45.6 L103.3 49 C103.2 61.1 24.8 59.1 24.9 47Z" fill="url(#bandG)"/><path d="M33 51.2 l9 2.6 M56 55.9 l15 .3 M84 54.6 l9 -2.7" stroke="#6a7884" stroke-width=".9" opacity=".55" fill="none"/></svg><div class="lb"><span class="a">9 (VRayMtl)</span></div></div>
<div class="tile" style="left:150px;top:314px"><svg style="left:0;top:0;color:#ac7c4c" width="128" height="120" viewBox="0 0 128 120"><rect width="128" height="120" fill="url(#bgG)"/><rect width="128" height="120" fill="url(#chk)"/><ellipse cx="18" cy="56" rx="30" ry="26" fill="#fff" opacity=".22" filter="url(#bl3)"/><ellipse cx="107" cy="72" rx="24" ry="28" fill="#000" opacity=".25" filter="url(#bl3)"/><ellipse cx="80" cy="104" rx="44" ry="7" fill="#000" opacity=".24" filter="url(#bl3)"/><path d="M4.2 72.7 L30 83.2 L22 89.6Z" fill="currentColor"/><path d="M4.2 72.7 L22 89.6 L21.5 84Z" fill="#000" opacity=".3"/><path d="M4.2 72.7 L30 83.2 L23 81.4Z" fill="#fff" opacity=".2"/><path d="M124.2 72.8 L100 82.4 L109 90Z" fill="currentColor"/><path d="M124.2 72.8 L109 90 L105 85.5Z" fill="#000" opacity=".36"/><path d="M124.2 72.8 L100 82.4 L106 82Z" fill="#fff" opacity=".12"/><ellipse cx="64.3" cy="97" rx="43.4" ry="16.3" fill="currentColor"/><ellipse cx="64.3" cy="97" rx="43.4" ry="16.3" fill="url(#wallS)"/><ellipse cx="64.3" cy="90" rx="44.5" ry="14" fill="currentColor"/><ellipse cx="64.3" cy="90" rx="44.5" ry="14" fill="url(#baseS)"/><ellipse cx="64.3" cy="90" rx="44.5" ry="14" fill="#fff" opacity=".1"/><path d="M34.6 94.2 L41.6 92.4 L41.8 99.6Z M94.6 94.2 L87.4 92.4 L87.4 100Z" fill="#000" opacity=".28"/><ellipse cx="64.3" cy="86.8" rx="33.4" ry="13" fill="#000" opacity=".42"/><ellipse cx="64.3" cy="85.6" rx="31.6" ry="12.4" fill="currentColor"/><ellipse cx="64.3" cy="85.6" rx="31.6" ry="12.4" fill="url(#baseS)"/><path d="M43 70 Q44.5 80.5 32.8 85.6 L95.8 85.6 Q84 80.5 85.5 70Z" fill="currentColor"/><path d="M43 70 Q44.5 80.5 32.8 85.6 L95.8 85.6 Q84 80.5 85.5 70Z" fill="url(#baseS)"/><ellipse cx="67" cy="78.6" rx="25" ry="5.4" fill="#000" opacity=".4" filter="url(#bl1)"/><circle cx="64" cy="41" r="39.3" fill="currentColor"/><circle cx="64" cy="41" r="39.3" fill="url(#sphS)"/><g clip-path="url(#woodC)"><rect width="128" height="120" filter="url(#wood)" opacity=".2" transform="rotate(5 64 60)"/></g><path d="M64 4.7 Q84 15 89.3 42.6 Q64 51.5 40 42.6 Q44.5 15 64 4.7Z" fill="currentColor"/><path d="M64 4.7 Q84 15 89.3 42.6 L83.2 40.6 Q79 22 63.8 12.6Z" fill="#fff" opacity=".22"/><path d="M64 4.7 Q44.5 15 40 42.6 L45 41.6 Q50 22 63.8 12.6Z" fill="#000" opacity=".42"/><path d="M89.3 42.6 Q64 51.5 40 42.6 L45 41.6 Q64 48 83.2 40.6Z" fill="#fff" opacity=".14"/><path d="M63.8 12.6 Q79 22 83.2 40.6 Q64 48 45 41.6 Q50 22 63.8 12.6Z" fill="url(#domeG)"/><text x="64.2" y="23.6" text-anchor="middle" font-family="'Liberation Sans',sans-serif" font-weight="bold" font-size="5.6" fill="#222" opacity=".85">TZ</text><rect x="60" y="25.6" width="8.4" height="1.5" fill="#333" opacity=".75"/><rect x="57" y="30.2" width="14.5" height="4.6" rx="1.2" fill="#62b6ea" opacity=".8"/><rect x="58.5" y="37.6" width="12" height=".9" fill="#888" opacity=".6"/><path d="M24.8 43.6 C24.8 56.1 103.2 58.1 103.2 45.6 L103.3 49 C103.2 61.1 24.8 59.1 24.9 47Z" fill="url(#bandG)"/><path d="M33 51.2 l9 2.6 M56 55.9 l15 .3 M84 54.6 l9 -2.7" stroke="#6a7884" stroke-width=".9" opacity=".55" fill="none"/></svg><div class="lb"><span class="a">10 (VRayMtl)</span></div></div>
<div class="tile" style="left:290px;top:314px"><svg style="left:0;top:0;color:#624e3c" width="128" height="120" viewBox="0 0 128 120"><rect width="128" height="120" fill="url(#bgG)"/><rect width="128" height="120" fill="url(#chk)"/><ellipse cx="18" cy="56" rx="30" ry="26" fill="#fff" opacity=".22" filter="url(#bl3)"/><ellipse cx="107" cy="72" rx="24" ry="28" fill="#000" opacity=".25" filter="url(#bl3)"/><ellipse cx="80" cy="104" rx="44" ry="7" fill="#000" opacity=".24" filter="url(#bl3)"/><path d="M4.2 72.7 L30 83.2 L22 89.6Z" fill="currentColor"/><path d="M4.2 72.7 L22 89.6 L21.5 84Z" fill="#000" opacity=".3"/><path d="M4.2 72.7 L30 83.2 L23 81.4Z" fill="#fff" opacity=".2"/><path d="M124.2 72.8 L100 82.4 L109 90Z" fill="currentColor"/><path d="M124.2 72.8 L109 90 L105 85.5Z" fill="#000" opacity=".36"/><path d="M124.2 72.8 L100 82.4 L106 82Z" fill="#fff" opacity=".12"/><ellipse cx="64.3" cy="97" rx="43.4" ry="16.3" fill="currentColor"/><ellipse cx="64.3" cy="97" rx="43.4" ry="16.3" fill="url(#wallS)"/><ellipse cx="64.3" cy="90" rx="44.5" ry="14" fill="currentColor"/><ellipse cx="64.3" cy="90" rx="44.5" ry="14" fill="url(#baseS)"/><ellipse cx="64.3" cy="90" rx="44.5" ry="14" fill="#fff" opacity=".1"/><path d="M34.6 94.2 L41.6 92.4 L41.8 99.6Z M94.6 94.2 L87.4 92.4 L87.4 100Z" fill="#000" opacity=".28"/><ellipse cx="64.3" cy="86.8" rx="33.4" ry="13" fill="#000" opacity=".42"/><ellipse cx="64.3" cy="85.6" rx="31.6" ry="12.4" fill="currentColor"/><ellipse cx="64.3" cy="85.6" rx="31.6" ry="12.4" fill="url(#baseS)"/><path d="M43 70 Q44.5 80.5 32.8 85.6 L95.8 85.6 Q84 80.5 85.5 70Z" fill="currentColor"/><path d="M43 70 Q44.5 80.5 32.8 85.6 L95.8 85.6 Q84 80.5 85.5 70Z" fill="url(#baseS)"/><ellipse cx="67" cy="78.6" rx="25" ry="5.4" fill="#000" opacity=".4" filter="url(#bl1)"/><circle cx="64" cy="41" r="39.3" fill="currentColor"/><circle cx="64" cy="41" r="39.3" fill="url(#sphS)"/><g clip-path="url(#woodC)"><rect width="128" height="120" filter="url(#wood)" opacity=".2" transform="rotate(-8 64 60)"/></g><path d="M64 4.7 Q84 15 89.3 42.6 Q64 51.5 40 42.6 Q44.5 15 64 4.7Z" fill="currentColor"/><path d="M64 4.7 Q84 15 89.3 42.6 L83.2 40.6 Q79 22 63.8 12.6Z" fill="#fff" opacity=".22"/><path d="M64 4.7 Q44.5 15 40 42.6 L45 41.6 Q50 22 63.8 12.6Z" fill="#000" opacity=".42"/><path d="M89.3 42.6 Q64 51.5 40 42.6 L45 41.6 Q64 48 83.2 40.6Z" fill="#fff" opacity=".14"/><path d="M63.8 12.6 Q79 22 83.2 40.6 Q64 48 45 41.6 Q50 22 63.8 12.6Z" fill="url(#domeG)"/><text x="64.2" y="23.6" text-anchor="middle" font-family="'Liberation Sans',sans-serif" font-weight="bold" font-size="5.6" fill="#222" opacity=".85">TZ</text><rect x="60" y="25.6" width="8.4" height="1.5" fill="#333" opacity=".75"/><rect x="57" y="30.2" width="14.5" height="4.6" rx="1.2" fill="#62b6ea" opacity=".8"/><rect x="58.5" y="37.6" width="12" height=".9" fill="#888" opacity=".6"/><path d="M24.8 43.6 C24.8 56.1 103.2 58.1 103.2 45.6 L103.3 49 C103.2 61.1 24.8 59.1 24.9 47Z" fill="url(#bandG)"/><path d="M33 51.2 l9 2.6 M56 55.9 l15 .3 M84 54.6 l9 -2.7" stroke="#6a7884" stroke-width=".9" opacity=".55" fill="none"/></svg><div class="lb"><span class="a">11 (VRayMtl)</span></div></div>
<div class="tile" style="left:430px;top:314px"><svg style="left:0;top:0;color:#3c3c3c" width="128" height="120" viewBox="0 0 128 120"><rect width="128" height="120" fill="url(#bgG)"/><rect width="128" height="120" fill="url(#chk)"/><ellipse cx="18" cy="56" rx="30" ry="26" fill="#fff" opacity=".22" filter="url(#bl3)"/><ellipse cx="107" cy="72" rx="24" ry="28" fill="#000" opacity=".25" filter="url(#bl3)"/><ellipse cx="80" cy="104" rx="44" ry="7" fill="#000" opacity=".24" filter="url(#bl3)"/><path d="M4.2 72.7 L30 83.2 L22 89.6Z" fill="currentColor"/><path d="M4.2 72.7 L22 89.6 L21.5 84Z" fill="#000" opacity=".3"/><path d="M4.2 72.7 L30 83.2 L23 81.4Z" fill="#fff" opacity=".2"/><path d="M124.2 72.8 L100 82.4 L109 90Z" fill="currentColor"/><path d="M124.2 72.8 L109 90 L105 85.5Z" fill="#000" opacity=".36"/><path d="M124.2 72.8 L100 82.4 L106 82Z" fill="#fff" opacity=".12"/><ellipse cx="64.3" cy="97" rx="43.4" ry="16.3" fill="currentColor"/><ellipse cx="64.3" cy="97" rx="43.4" ry="16.3" fill="url(#wallS)"/><ellipse cx="64.3" cy="90" rx="44.5" ry="14" fill="currentColor"/><ellipse cx="64.3" cy="90" rx="44.5" ry="14" fill="url(#baseS)"/><ellipse cx="64.3" cy="90" rx="44.5" ry="14" fill="#fff" opacity=".1"/><path d="M34.6 94.2 L41.6 92.4 L41.8 99.6Z M94.6 94.2 L87.4 92.4 L87.4 100Z" fill="#000" opacity=".28"/><ellipse cx="64.3" cy="86.8" rx="33.4" ry="13" fill="#000" opacity=".42"/><ellipse cx="64.3" cy="85.6" rx="31.6" ry="12.4" fill="currentColor"/><ellipse cx="64.3" cy="85.6" rx="31.6" ry="12.4" fill="url(#baseS)"/><path d="M43 70 Q44.5 80.5 32.8 85.6 L95.8 85.6 Q84 80.5 85.5 70Z" fill="currentColor"/><path d="M43 70 Q44.5 80.5 32.8 85.6 L95.8 85.6 Q84 80.5 85.5 70Z" fill="url(#baseS)"/><ellipse cx="67" cy="78.6" rx="25" ry="5.4" fill="#000" opacity=".4" filter="url(#bl1)"/><circle cx="64" cy="41" r="39.3" fill="currentColor"/><circle cx="64" cy="41" r="39.3" fill="url(#sphS)"/><g clip-path="url(#woodC)"><rect width="128" height="120" filter="url(#wood)" opacity=".2" transform="rotate(84 64 60)"/></g><path d="M64 4.7 Q84 15 89.3 42.6 Q64 51.5 40 42.6 Q44.5 15 64 4.7Z" fill="currentColor"/><path d="M64 4.7 Q84 15 89.3 42.6 L83.2 40.6 Q79 22 63.8 12.6Z" fill="#fff" opacity=".22"/><path d="M64 4.7 Q44.5 15 40 42.6 L45 41.6 Q50 22 63.8 12.6Z" fill="#000" opacity=".42"/><path d="M89.3 42.6 Q64 51.5 40 42.6 L45 41.6 Q64 48 83.2 40.6Z" fill="#fff" opacity=".14"/><path d="M63.8 12.6 Q79 22 83.2 40.6 Q64 48 45 41.6 Q50 22 63.8 12.6Z" fill="url(#domeG)"/><text x="64.2" y="23.6" text-anchor="middle" font-family="'Liberation Sans',sans-serif" font-weight="bold" font-size="5.6" fill="#222" opacity=".85">TZ</text><rect x="60" y="25.6" width="8.4" height="1.5" fill="#333" opacity=".75"/><rect x="57" y="30.2" width="14.5" height="4.6" rx="1.2" fill="#62b6ea" opacity=".8"/><rect x="58.5" y="37.6" width="12" height=".9" fill="#888" opacity=".6"/><path d="M24.8 43.6 C24.8 56.1 103.2 58.1 103.2 45.6 L103.3 49 C103.2 61.1 24.8 59.1 24.9 47Z" fill="url(#bandG)"/><path d="M33 51.2 l9 2.6 M56 55.9 l15 .3 M84 54.6 l9 -2.7" stroke="#6a7884" stroke-width=".9" opacity=".55" fill="none"/></svg><div class="lb"><span class="a">12 (VRayMtl)</span></div></div>
<div class="tile" style="left:10px;top:466px"><svg style="left:0;top:0;color:#d4b88e" width="128" height="120" viewBox="0 0 128 120"><rect width="128" height="120" fill="url(#bgG)"/><rect width="128" height="120" fill="url(#chk)"/><ellipse cx="18" cy="56" rx="30" ry="26" fill="#fff" opacity=".22" filter="url(#bl3)"/><ellipse cx="107" cy="72" rx="24" ry="28" fill="#000" opacity=".25" filter="url(#bl3)"/><ellipse cx="80" cy="104" rx="44" ry="7" fill="#000" opacity=".24" filter="url(#bl3)"/><path d="M4.2 72.7 L30 83.2 L22 89.6Z" fill="currentColor"/><path d="M4.2 72.7 L22 89.6 L21.5 84Z" fill="#000" opacity=".3"/><path d="M4.2 72.7 L30 83.2 L23 81.4Z" fill="#fff" opacity=".2"/><path d="M124.2 72.8 L100 82.4 L109 90Z" fill="currentColor"/><path d="M124.2 72.8 L109 90 L105 85.5Z" fill="#000" opacity=".36"/><path d="M124.2 72.8 L100 82.4 L106 82Z" fill="#fff" opacity=".12"/><ellipse cx="64.3" cy="97" rx="43.4" ry="16.3" fill="currentColor"/><ellipse cx="64.3" cy="97" rx="43.4" ry="16.3" fill="url(#wallS)"/><ellipse cx="64.3" cy="90" rx="44.5" ry="14" fill="currentColor"/><ellipse cx="64.3" cy="90" rx="44.5" ry="14" fill="url(#baseS)"/><ellipse cx="64.3" cy="90" rx="44.5" ry="14" fill="#fff" opacity=".1"/><path d="M34.6 94.2 L41.6 92.4 L41.8 99.6Z M94.6 94.2 L87.4 92.4 L87.4 100Z" fill="#000" opacity=".28"/><ellipse cx="64.3" cy="86.8" rx="33.4" ry="13" fill="#000" opacity=".42"/><ellipse cx="64.3" cy="85.6" rx="31.6" ry="12.4" fill="currentColor"/><ellipse cx="64.3" cy="85.6" rx="31.6" ry="12.4" fill="url(#baseS)"/><path d="M43 70 Q44.5 80.5 32.8 85.6 L95.8 85.6 Q84 80.5 85.5 70Z" fill="currentColor"/><path d="M43 70 Q44.5 80.5 32.8 85.6 L95.8 85.6 Q84 80.5 85.5 70Z" fill="url(#baseS)"/><ellipse cx="67" cy="78.6" rx="25" ry="5.4" fill="#000" opacity=".4" filter="url(#bl1)"/><circle cx="64" cy="41" r="39.3" fill="currentColor"/><circle cx="64" cy="41" r="39.3" fill="url(#sphS)"/><g clip-path="url(#woodC)"><rect width="128" height="120" filter="url(#wood)" opacity=".2" transform="rotate(20 64 60)"/></g><path d="M64 4.7 Q84 15 89.3 42.6 Q64 51.5 40 42.6 Q44.5 15 64 4.7Z" fill="currentColor"/><path d="M64 4.7 Q84 15 89.3 42.6 L83.2 40.6 Q79 22 63.8 12.6Z" fill="#fff" opacity=".22"/><path d="M64 4.7 Q44.5 15 40 42.6 L45 41.6 Q50 22 63.8 12.6Z" fill="#000" opacity=".42"/><path d="M89.3 42.6 Q64 51.5 40 42.6 L45 41.6 Q64 48 83.2 40.6Z" fill="#fff" opacity=".14"/><path d="M63.8 12.6 Q79 22 83.2 40.6 Q64 48 45 41.6 Q50 22 63.8 12.6Z" fill="url(#domeG)"/><text x="64.2" y="23.6" text-anchor="middle" font-family="'Liberation Sans',sans-serif" font-weight="bold" font-size="5.6" fill="#222" opacity=".85">TZ</text><rect x="60" y="25.6" width="8.4" height="1.5" fill="#333" opacity=".75"/><rect x="57" y="30.2" width="14.5" height="4.6" rx="1.2" fill="#62b6ea" opacity=".8"/><rect x="58.5" y="37.6" width="12" height=".9" fill="#888" opacity=".6"/><path d="M24.8 43.6 C24.8 56.1 103.2 58.1 103.2 45.6 L103.3 49 C103.2 61.1 24.8 59.1 24.9 47Z" fill="url(#bandG)"/><path d="M33 51.2 l9 2.6 M56 55.9 l15 .3 M84 54.6 l9 -2.7" stroke="#6a7884" stroke-width=".9" opacity=".55" fill="none"/></svg><div class="lb"><span class="a">13 (VRayMtl)</span></div></div>
<div class="tile" style="left:150px;top:466px"><svg style="left:0;top:0;color:#ebe5d6" width="128" height="120" viewBox="0 0 128 120"><rect width="128" height="120" fill="url(#bgG)"/><rect width="128" height="120" fill="url(#chk)"/><ellipse cx="18" cy="56" rx="30" ry="26" fill="#fff" opacity=".22" filter="url(#bl3)"/><ellipse cx="107" cy="72" rx="24" ry="28" fill="#000" opacity=".25" filter="url(#bl3)"/><ellipse cx="80" cy="104" rx="44" ry="7" fill="#000" opacity=".24" filter="url(#bl3)"/><path d="M4.2 72.7 L30 83.2 L22 89.6Z" fill="currentColor"/><path d="M4.2 72.7 L22 89.6 L21.5 84Z" fill="#000" opacity=".3"/><path d="M4.2 72.7 L30 83.2 L23 81.4Z" fill="#fff" opacity=".2"/><path d="M124.2 72.8 L100 82.4 L109 90Z" fill="currentColor"/><path d="M124.2 72.8 L109 90 L105 85.5Z" fill="#000" opacity=".36"/><path d="M124.2 72.8 L100 82.4 L106 82Z" fill="#fff" opacity=".12"/><ellipse cx="64.3" cy="97" rx="43.4" ry="16.3" fill="currentColor"/><ellipse cx="64.3" cy="97" rx="43.4" ry="16.3" fill="url(#wallS)"/><ellipse cx="64.3" cy="90" rx="44.5" ry="14" fill="currentColor"/><ellipse cx="64.3" cy="90" rx="44.5" ry="14" fill="url(#baseS)"/><ellipse cx="64.3" cy="90" rx="44.5" ry="14" fill="#fff" opacity=".1"/><path d="M34.6 94.2 L41.6 92.4 L41.8 99.6Z M94.6 94.2 L87.4 92.4 L87.4 100Z" fill="#000" opacity=".28"/><ellipse cx="64.3" cy="86.8" rx="33.4" ry="13" fill="#000" opacity=".42"/><ellipse cx="64.3" cy="85.6" rx="31.6" ry="12.4" fill="currentColor"/><ellipse cx="64.3" cy="85.6" rx="31.6" ry="12.4" fill="url(#baseS)"/><path d="M43 70 Q44.5 80.5 32.8 85.6 L95.8 85.6 Q84 80.5 85.5 70Z" fill="currentColor"/><path d="M43 70 Q44.5 80.5 32.8 85.6 L95.8 85.6 Q84 80.5 85.5 70Z" fill="url(#baseS)"/><ellipse cx="67" cy="78.6" rx="25" ry="5.4" fill="#000" opacity=".4" filter="url(#bl1)"/><circle cx="64" cy="41" r="39.3" fill="currentColor"/><circle cx="64" cy="41" r="39.3" fill="url(#sphS)"/><g clip-path="url(#woodC)"><rect width="128" height="120" filter="url(#wood)" opacity=".2" transform="rotate(82 64 60)"/></g><path d="M64 4.7 Q84 15 89.3 42.6 Q64 51.5 40 42.6 Q44.5 15 64 4.7Z" fill="currentColor"/><path d="M64 4.7 Q84 15 89.3 42.6 L83.2 40.6 Q79 22 63.8 12.6Z" fill="#fff" opacity=".22"/><path d="M64 4.7 Q44.5 15 40 42.6 L45 41.6 Q50 22 63.8 12.6Z" fill="#000" opacity=".42"/><path d="M89.3 42.6 Q64 51.5 40 42.6 L45 41.6 Q64 48 83.2 40.6Z" fill="#fff" opacity=".14"/><path d="M63.8 12.6 Q79 22 83.2 40.6 Q64 48 45 41.6 Q50 22 63.8 12.6Z" fill="url(#domeG)"/><text x="64.2" y="23.6" text-anchor="middle" font-family="'Liberation Sans',sans-serif" font-weight="bold" font-size="5.6" fill="#222" opacity=".85">TZ</text><rect x="60" y="25.6" width="8.4" height="1.5" fill="#333" opacity=".75"/><rect x="57" y="30.2" width="14.5" height="4.6" rx="1.2" fill="#62b6ea" opacity=".8"/><rect x="58.5" y="37.6" width="12" height=".9" fill="#888" opacity=".6"/><path d="M24.8 43.6 C24.8 56.1 103.2 58.1 103.2 45.6 L103.3 49 C103.2 61.1 24.8 59.1 24.9 47Z" fill="url(#bandG)"/><path d="M33 51.2 l9 2.6 M56 55.9 l15 .3 M84 54.6 l9 -2.7" stroke="#6a7884" stroke-width=".9" opacity=".55" fill="none"/></svg><div class="lb"><span class="a">14 (VRayMtl)</span></div></div>
<div class="tile" style="left:290px;top:466px"><svg style="left:0;top:0;color:#d0a068" width="128" height="120" viewBox="0 0 128 120"><rect width="128" height="120" fill="url(#bgG)"/><rect width="128" height="120" fill="url(#chk)"/><ellipse cx="18" cy="56" rx="30" ry="26" fill="#fff" opacity=".22" filter="url(#bl3)"/><ellipse cx="107" cy="72" rx="24" ry="28" fill="#000" opacity=".25" filter="url(#bl3)"/><ellipse cx="80" cy="104" rx="44" ry="7" fill="#000" opacity=".24" filter="url(#bl3)"/><path d="M4.2 72.7 L30 83.2 L22 89.6Z" fill="currentColor"/><path d="M4.2 72.7 L22 89.6 L21.5 84Z" fill="#000" opacity=".3"/><path d="M4.2 72.7 L30 83.2 L23 81.4Z" fill="#fff" opacity=".2"/><path d="M124.2 72.8 L100 82.4 L109 90Z" fill="currentColor"/><path d="M124.2 72.8 L109 90 L105 85.5Z" fill="#000" opacity=".36"/><path d="M124.2 72.8 L100 82.4 L106 82Z" fill="#fff" opacity=".12"/><ellipse cx="64.3" cy="97" rx="43.4" ry="16.3" fill="currentColor"/><ellipse cx="64.3" cy="97" rx="43.4" ry="16.3" fill="url(#wallS)"/><ellipse cx="64.3" cy="90" rx="44.5" ry="14" fill="currentColor"/><ellipse cx="64.3" cy="90" rx="44.5" ry="14" fill="url(#baseS)"/><ellipse cx="64.3" cy="90" rx="44.5" ry="14" fill="#fff" opacity=".1"/><path d="M34.6 94.2 L41.6 92.4 L41.8 99.6Z M94.6 94.2 L87.4 92.4 L87.4 100Z" fill="#000" opacity=".28"/><ellipse cx="64.3" cy="86.8" rx="33.4" ry="13" fill="#000" opacity=".42"/><ellipse cx="64.3" cy="85.6" rx="31.6" ry="12.4" fill="currentColor"/><ellipse cx="64.3" cy="85.6" rx="31.6" ry="12.4" fill="url(#baseS)"/><path d="M43 70 Q44.5 80.5 32.8 85.6 L95.8 85.6 Q84 80.5 85.5 70Z" fill="currentColor"/><path d="M43 70 Q44.5 80.5 32.8 85.6 L95.8 85.6 Q84 80.5 85.5 70Z" fill="url(#baseS)"/><ellipse cx="67" cy="78.6" rx="25" ry="5.4" fill="#000" opacity=".4" filter="url(#bl1)"/><circle cx="64" cy="41" r="39.3" fill="currentColor"/><circle cx="64" cy="41" r="39.3" fill="url(#sphS)"/><g clip-path="url(#woodC)"><rect width="128" height="120" filter="url(#wood)" opacity=".2" transform="rotate(6 64 60)"/></g><path d="M64 4.7 Q84 15 89.3 42.6 Q64 51.5 40 42.6 Q44.5 15 64 4.7Z" fill="currentColor"/><path d="M64 4.7 Q84 15 89.3 42.6 L83.2 40.6 Q79 22 63.8 12.6Z" fill="#fff" opacity=".22"/><path d="M64 4.7 Q44.5 15 40 42.6 L45 41.6 Q50 22 63.8 12.6Z" fill="#000" opacity=".42"/><path d="M89.3 42.6 Q64 51.5 40 42.6 L45 41.6 Q64 48 83.2 40.6Z" fill="#fff" opacity=".14"/><path d="M63.8 12.6 Q79 22 83.2 40.6 Q64 48 45 41.6 Q50 22 63.8 12.6Z" fill="url(#domeG)"/><text x="64.2" y="23.6" text-anchor="middle" font-family="'Liberation Sans',sans-serif" font-weight="bold" font-size="5.6" fill="#222" opacity=".85">TZ</text><rect x="60" y="25.6" width="8.4" height="1.5" fill="#333" opacity=".75"/><rect x="57" y="30.2" width="14.5" height="4.6" rx="1.2" fill="#62b6ea" opacity=".8"/><rect x="58.5" y="37.6" width="12" height=".9" fill="#888" opacity=".6"/><path d="M24.8 43.6 C24.8 56.1 103.2 58.1 103.2 45.6 L103.3 49 C103.2 61.1 24.8 59.1 24.9 47Z" fill="url(#bandG)"/><path d="M33 51.2 l9 2.6 M56 55.9 l15 .3 M84 54.6 l9 -2.7" stroke="#6a7884" stroke-width=".9" opacity=".55" fill="none"/></svg><div class="lb"><span class="a">15 (VRayMtl)</span></div></div>
<div class="tile" style="left:430px;top:466px"><svg style="left:0;top:0;color:#e6cca0" width="128" height="120" viewBox="0 0 128 120"><rect width="128" height="120" fill="url(#bgG)"/><rect width="128" height="120" fill="url(#chk)"/><ellipse cx="18" cy="56" rx="30" ry="26" fill="#fff" opacity=".22" filter="url(#bl3)"/><ellipse cx="107" cy="72" rx="24" ry="28" fill="#000" opacity=".25" filter="url(#bl3)"/><ellipse cx="80" cy="104" rx="44" ry="7" fill="#000" opacity=".24" filter="url(#bl3)"/><path d="M4.2 72.7 L30 83.2 L22 89.6Z" fill="currentColor"/><path d="M4.2 72.7 L22 89.6 L21.5 84Z" fill="#000" opacity=".3"/><path d="M4.2 72.7 L30 83.2 L23 81.4Z" fill="#fff" opacity=".2"/><path d="M124.2 72.8 L100 82.4 L109 90Z" fill="currentColor"/><path d="M124.2 72.8 L109 90 L105 85.5Z" fill="#000" opacity=".36"/><path d="M124.2 72.8 L100 82.4 L106 82Z" fill="#fff" opacity=".12"/><ellipse cx="64.3" cy="97" rx="43.4" ry="16.3" fill="currentColor"/><ellipse cx="64.3" cy="97" rx="43.4" ry="16.3" fill="url(#wallS)"/><ellipse cx="64.3" cy="90" rx="44.5" ry="14" fill="currentColor"/><ellipse cx="64.3" cy="90" rx="44.5" ry="14" fill="url(#baseS)"/><ellipse cx="64.3" cy="90" rx="44.5" ry="14" fill="#fff" opacity=".1"/><path d="M34.6 94.2 L41.6 92.4 L41.8 99.6Z M94.6 94.2 L87.4 92.4 L87.4 100Z" fill="#000" opacity=".28"/><ellipse cx="64.3" cy="86.8" rx="33.4" ry="13" fill="#000" opacity=".42"/><ellipse cx="64.3" cy="85.6" rx="31.6" ry="12.4" fill="currentColor"/><ellipse cx="64.3" cy="85.6" rx="31.6" ry="12.4" fill="url(#baseS)"/><path d="M43 70 Q44.5 80.5 32.8 85.6 L95.8 85.6 Q84 80.5 85.5 70Z" fill="currentColor"/><path d="M43 70 Q44.5 80.5 32.8 85.6 L95.8 85.6 Q84 80.5 85.5 70Z" fill="url(#baseS)"/><ellipse cx="67" cy="78.6" rx="25" ry="5.4" fill="#000" opacity=".4" filter="url(#bl1)"/><circle cx="64" cy="41" r="39.3" fill="currentColor"/><circle cx="64" cy="41" r="39.3" fill="url(#sphS)"/><g clip-path="url(#woodC)"><rect width="128" height="120" filter="url(#wood)" opacity=".2" transform="rotate(84 64 60)"/></g><path d="M64 4.7 Q84 15 89.3 42.6 Q64 51.5 40 42.6 Q44.5 15 64 4.7Z" fill="currentColor"/><path d="M64 4.7 Q84 15 89.3 42.6 L83.2 40.6 Q79 22 63.8 12.6Z" fill="#fff" opacity=".22"/><path d="M64 4.7 Q44.5 15 40 42.6 L45 41.6 Q50 22 63.8 12.6Z" fill="#000" opacity=".42"/><path d="M89.3 42.6 Q64 51.5 40 42.6 L45 41.6 Q64 48 83.2 40.6Z" fill="#fff" opacity=".14"/><path d="M63.8 12.6 Q79 22 83.2 40.6 Q64 48 45 41.6 Q50 22 63.8 12.6Z" fill="url(#domeG)"/><text x="64.2" y="23.6" text-anchor="middle" font-family="'Liberation Sans',sans-serif" font-weight="bold" font-size="5.6" fill="#222" opacity=".85">TZ</text><rect x="60" y="25.6" width="8.4" height="1.5" fill="#333" opacity=".75"/><rect x="57" y="30.2" width="14.5" height="4.6" rx="1.2" fill="#62b6ea" opacity=".8"/><rect x="58.5" y="37.6" width="12" height=".9" fill="#888" opacity=".6"/><path d="M24.8 43.6 C24.8 56.1 103.2 58.1 103.2 45.6 L103.3 49 C103.2 61.1 24.8 59.1 24.9 47Z" fill="url(#bandG)"/><path d="M33 51.2 l9 2.6 M56 55.9 l15 .3 M84 54.6 l9 -2.7" stroke="#6a7884" stroke-width=".9" opacity=".55" fill="none"/></svg><div class="lb"><span class="a">16 (VRayMtl)</span></div></div>
</div>
<svg style="left:205px;top:93px" width="135" height="28" viewBox="205 93 135 28"><path d="M214.1 100.4 C213.2 104.5 214.3 108.2 217.6 110.6" stroke="#c8c8c8" stroke-width="1.7" fill="none"/><path d="M215.6 112.9 L220.4 112.4 L218.5 108Z" fill="#c8c8c8"/><circle cx="228.9" cy="101.3" r="4.5" fill="#c8c8c8"/><circle cx="224.3" cy="101.3" r="5.4" fill="#494949"/><circle cx="224.3" cy="101.3" r="4.5" fill="#c8c8c8"/><rect x="222.8" y="108" width="9.4" height="9" fill="#9c9c9c"/><rect x="223" y="109.4" width="7.6" height="7.6" fill="#c8c8c8"/><path d="M242.6 114.3 C240.6 110.5 241.6 106.3 245.6 103.8" stroke="#c8c8c8" stroke-width="1.7" fill="none"/><path d="M243.6 102.6 L248.2 102.3 L247.1 106.8Z" fill="#c8c8c8"/><circle cx="253.9" cy="99.0" r="2.15" fill="#c8c8c8"/><circle cx="259.1" cy="99.0" r="2.15" fill="#c8c8c8"/><circle cx="253.9" cy="104.1" r="2.15" fill="#c8c8c8"/><circle cx="259.1" cy="104.1" r="2.15" fill="#c8c8c8"/><circle cx="257.1" cy="112.2" r="4.6" fill="#c8c8c8"/><circle cx="251.8" cy="112.2" r="5.7" fill="#494949"/><circle cx="251.8" cy="112.2" r="4.9" fill="#c8c8c8"/><rect x="267.8" y="98" width="1.2" height="19" fill="#7c7c7c"/><path d="M280.9 116.6 C277.0 113 275.0 108 276.2 103.5 C276.8 101 277.8 99.6 278.8 98.4 L285.4 98.5 L284.4 105.6 L282.3 103.7 C280.0 107 279.0 111 280.9 116.6Z" stroke="#c8c8c8" stroke-width="1.25" fill="#606060" stroke-linejoin="round"/><path d="M286.5 97h8.3v8.5h-8.3z" fill="#c8c8c8"/><path d="M289.3 97h3.1v2.8h-3.1z" fill="#4a4a4a"/><path d="M291.3 97.4h1v2h-1z" fill="#aaa"/><path d="M287.8 101.6h5.7v.9h-5.7zM287.8 103.4h5.7v.9h-5.7z" fill="#4a4a4a"/><circle cx="289.9" cy="112.4" r="4.9" fill="#c8c8c8"/><path d="M310.9 116.6 C307.0 113 305.0 108 306.2 103.5 C306.8 101 307.8 99.6 308.8 98.4 L315.4 98.5 L314.4 105.6 L312.3 103.7 C310.0 107 309.0 111 310.9 116.6Z" stroke="#c8c8c8" stroke-width="1.25" fill="#606060" stroke-linejoin="round"/><path d="M316.7 97h8.3v8.7h-8.3z" fill="#a2a2a2"/><path d="M319.5 97h3.1v2.8h-3.1z" fill="#4a4a4a"/><path d="M321.5 97.4h1v2h-1z" fill="#999"/><path d="M318 100.6h5.6v4h-5.6z" fill="#7a7a7a"/><circle cx="317.8" cy="110.7" r="2.3" fill="#c8c8c8"/><circle cx="323.0" cy="110.7" r="2.3" fill="#c8c8c8"/><circle cx="317.8" cy="115.4" r="2.3" fill="#c8c8c8"/><circle cx="323.0" cy="115.4" r="2.3" fill="#c8c8c8"/></svg>
<svg style="left:205px;top:122px;pointer-events:none" width="586" height="554" viewBox="205 122 586 554"><g transform="translate(0,0)" opacity=".41" fill="#3c3c3c" stroke="none"><path d="M319.9 308.8 L364.5 286.9 L375.9 282.0 L380.9 293.9 L378.0 300.0 L373.2 302.0 M319.9 308.8 L325.3 325.0 L353.6 309.5 M323.2 310.4 L327.7 321.6 L354.3 306.4 M364.5 287.8 L345.5 345.3 M360.7 290.1 L348.5 344.6 M376.4 285.8 L364.5 345.3 M364.5 286.9 L368.5 289.2 L376.4 285.8 M314.5 345.3 L394.9 345.3 L394.9 363.5 L314.5 363.5Z M318.5 347.3 L386.1 347.3 L386.1 357.7 L318.5 357.7Z M314.5 345.3 L318.5 347.3 M314.5 363.5 L318.5 357.7 M342.8 363.5 L352.3 367.2 L356.1 363.5" fill="none" stroke="#3c3c3c" stroke-width="2.2" stroke-linejoin="round"/><text x="395.5" y="329.4" font-size="48" font-weight="bold" textLength="60" lengthAdjust="spacingAndGlyphs" font-family="'Liberation Sans',sans-serif">TZ</text><text x="456" y="327" font-size="39" font-weight="900" textLength="122" lengthAdjust="spacing" font-family="'Liberation Sans','Noto Sans CJK SC',sans-serif">素材网</text><text x="446" y="355" font-size="13.6" font-weight="bold" textLength="131.5" lengthAdjust="spacing" font-family="'Liberation Sans',sans-serif">TZSUCAI.COM</text></g><g transform="translate(0,88)" opacity=".3" fill="#ffffff" stroke="none"><path d="M319.9 308.8 L364.5 286.9 L375.9 282.0 L380.9 293.9 L378.0 300.0 L373.2 302.0 M319.9 308.8 L325.3 325.0 L353.6 309.5 M323.2 310.4 L327.7 321.6 L354.3 306.4 M364.5 287.8 L345.5 345.3 M360.7 290.1 L348.5 344.6 M376.4 285.8 L364.5 345.3 M364.5 286.9 L368.5 289.2 L376.4 285.8 M314.5 345.3 L394.9 345.3 L394.9 363.5 L314.5 363.5Z M318.5 347.3 L386.1 347.3 L386.1 357.7 L318.5 357.7Z M314.5 345.3 L318.5 347.3 M314.5 363.5 L318.5 357.7 M342.8 363.5 L352.3 367.2 L356.1 363.5" fill="none" stroke="#ffffff" stroke-width="2.2" stroke-linejoin="round"/><text x="395.5" y="329.4" font-size="48" font-weight="bold" textLength="60" lengthAdjust="spacingAndGlyphs" font-family="'Liberation Sans',sans-serif">TZ</text><text x="456" y="327" font-size="39" font-weight="900" textLength="122" lengthAdjust="spacing" font-family="'Liberation Sans','Noto Sans CJK SC',sans-serif">素材网</text><text x="446" y="355" font-size="13.6" font-weight="bold" textLength="131.5" lengthAdjust="spacing" font-family="'Liberation Sans',sans-serif">TZSUCAI.COM</text></g></svg>
</div>
</body></html>
